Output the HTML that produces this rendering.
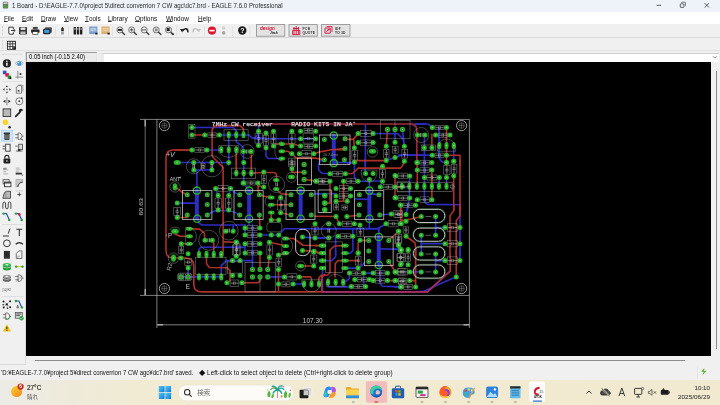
<!DOCTYPE html><html><head><meta charset="utf-8"><title>EAGLE</title><style>
html,body{margin:0;padding:0;}
body{will-change:transform;width:720px;height:405px;overflow:hidden;position:relative;background:#f0f0f0;font-family:"Liberation Sans","Noto Sans CJK JP",sans-serif;color:#111;}
.abs{position:absolute;}
.t{position:absolute;white-space:nowrap;line-height:1;transform-origin:0 50%;}
#title{left:0;top:0;width:720px;height:12px;background:#eef3f9;}
#menu{left:0;top:12px;width:720px;height:12px;background:#fff;}
#tb1{left:0;top:24px;width:720px;height:14px;background:#f0f0f0;border-bottom:1px solid #dadada;box-sizing:border-box;}
#tb2{left:0;top:38px;width:720px;height:13px;background:#f0f0f0;border-bottom:1px solid #e0e0e0;box-sizing:border-box;}
#left{left:0;top:51px;width:25px;height:313px;background:#f0f0f0;border-right:1px solid #dcdcdc;border-bottom:1px solid #dcdcdc;}
#canvas{left:26px;top:62px;width:685px;height:294px;background:#000;}
#cmd{left:99px;top:53px;width:620px;height:9px;border-left:5px solid #ececec;background:#fff;border-top:1px solid #cfcfcf;box-sizing:border-box}
#coord{left:26px;top:52.3px;width:71px;height:9.7px;background:#ebebeb;border:1px solid #e2e2e2;border-top-color:#9a9a9a;border-left-color:#9a9a9a;box-sizing:border-box;}
#vs{left:711px;top:62px;width:9px;height:304px;background:#f0f0f0;}
#vst{left:715.6px;top:71px;width:1px;height:278px;background:#8c8c8c;}
#hst{left:35px;top:359.8px;width:650px;height:1px;background:#8c8c8c;}
#status{left:0;top:366px;width:720px;height:14px;background:#f0f0f0;}
#task{left:0;top:380.2px;width:720px;height:24.8px;background:linear-gradient(90deg,#ecebe6 0%,#eeeadb 10%,#f1ebd2 22%,#f1ead0 100%);}
.m{top:14.6px;font-size:7px;transform:scaleX(0.92);}
.m u{text-decoration:none;display:inline-block;height:6.3px;border-bottom:0.6px solid #333;vertical-align:top}
</style></head><body>
<div class="abs" id="title"></div>
<div class="t" id="ttl" style="left:12.4px;top:2.7px;font-size:6.6px;color:#2a2a2a;transform:scaleX(0.93)">1 Board - D:\EAGLE-7.7.0\project 5\direct converrion 7 CW agc\dc7.brd - EAGLE 7.6.0 Professional</div>
<div class="abs" id="menu"></div>
<div class="t m" style="left:3.6px"><u>F</u>ile</div><div class="t m" style="left:22.4px"><u>E</u>dit</div><div class="t m" style="left:41.2px"><u>D</u>raw</div><div class="t m" style="left:63.6px"><u>V</u>iew</div><div class="t m" style="left:85px"><u>T</u>ools</div><div class="t m" style="left:108px"><u>L</u>ibrary</div><div class="t m" style="left:135px"><u>O</u>ptions</div><div class="t m" style="left:166px"><u>W</u>indow</div><div class="t m" style="left:198px"><u>H</u>elp</div>
<div class="abs" id="tb1"></div>
<div class="abs" id="tb2"></div>
<div class="abs" id="left"></div>
<div class="abs" id="cmd"></div>
<div class="abs" id="coord"></div>
<div class="t" id="crd" style="left:29px;top:54px;font-size:6.6px;color:#000;transform:scaleX(0.893)">0.05 inch (-0.15 2.40)</div>
<div class="abs" id="vs"></div><div class="abs" id="vst"></div>
<div class="abs" id="canvas"></div>
<div class="abs" id="hst"></div>
<div class="abs" id="status"></div>
<div class="t" id="st1" style="left:1px;top:369.6px;font-size:6.4px;color:#111;transform:scaleX(0.942)">'D:¥EAGLE-7.7.0¥project 5¥direct converrion 7 CW agc¥dc7.brd' saved.</div>
<div class="t" id="st2" style="left:198.6px;top:369.6px;font-size:6.4px;color:#111;transform:scaleX(0.992)">◆ Left-click to select object to delete (Ctrl+right-click to delete group)</div>
<div class="abs" id="task"></div>
<svg class="abs" style="left:0;top:0" width="720" height="405" viewBox="0 0 720 405"><line x1="2.5" y1="26" x2="2.5" y2="36" stroke="#b8b8b8" stroke-width="0.7" stroke-dasharray="0.7 0.7"/><line x1="2.5" y1="40" x2="2.5" y2="49" stroke="#b8b8b8" stroke-width="0.7" stroke-dasharray="0.7 0.7"/><line x1="55.5" y1="26" x2="55.5" y2="36" stroke="#dcdcdc" stroke-width="0.6"/><line x1="68.5" y1="26" x2="68.5" y2="36" stroke="#dcdcdc" stroke-width="0.6"/><line x1="86" y1="26" x2="86" y2="36" stroke="#dcdcdc" stroke-width="0.6"/><line x1="112.5" y1="26" x2="112.5" y2="36" stroke="#dcdcdc" stroke-width="0.6"/><line x1="176.7" y1="26" x2="176.7" y2="36" stroke="#dcdcdc" stroke-width="0.6"/><line x1="204.5" y1="26" x2="204.5" y2="36" stroke="#dcdcdc" stroke-width="0.6"/><line x1="232.6" y1="26" x2="232.6" y2="36" stroke="#dcdcdc" stroke-width="0.6"/><line x1="250" y1="26" x2="250" y2="36" stroke="#dcdcdc" stroke-width="0.6"/><g transform="translate(11.8 30.7)"><path d="M-3 -3.5h4.5v2M1.5 1.5v2h-3.3q-1.2 0-1.2-1.2v-5.8" fill="#fff" stroke="#222" stroke-width="0.9"/><path d="M-0.8 -0.2h3.8M1.8 -1.6l1.6 1.4-1.6 1.4" fill="none" stroke="#222" stroke-width="0.9"/></g><g transform="translate(23 30.7)"><rect x="-4" y="-3.8" width="8" height="7.6" rx="0.8" fill="#333"/><rect x="-2.4" y="-3.2" width="4.8" height="2.4" fill="#e8e8e8"/><rect x="-2.6" y="0.8" width="5.2" height="2.6" fill="#bbb"/></g><g transform="translate(35.3 30.7)"><rect x="-2.4" y="-3.8" width="4.8" height="2.4" fill="#444"/><rect x="-4.2" y="-1.2" width="8.4" height="3.2" rx="0.6" fill="#222"/><rect x="-2.6" y="1" width="5.2" height="2.8" fill="#fff" stroke="#222" stroke-width="0.6"/></g><g transform="translate(47.5 30.7)"><rect x="-2.6" y="-3.4" width="7" height="5.4" rx="1" fill="#555"/><rect x="-4.4" y="-2" width="7.4" height="5.6" rx="1.2" fill="#222"/><rect x="-3.2" y="-1" width="5" height="3.4" rx="0.8" fill="#3a9be0"/></g><g transform="translate(62.5 30.7)"><path d="M0 -4l1.6 2.2h-3.2z" fill="#222"/><rect x="-1.3" y="-1.6" width="2.6" height="2" fill="#222"/><rect x="-1.3" y="0.8" width="2.6" height="3" fill="#9a9a9a"/></g><g transform="translate(78 30.7)"><rect x="-4.4" y="-3.8" width="2.4" height="7.6" rx="0.5" fill="#222"/><rect x="-1.2" y="-3.8" width="2.4" height="7.6" rx="0.5" fill="#222"/><rect x="2" y="-3.8" width="2.4" height="7.6" rx="0.5" fill="#222"/><rect x="-4.4" y="-2.2" width="8.8" height="0.9" fill="#ccc"/></g><g transform="translate(93.3 30.7)"><rect x="-4.1" y="-4.2" width="8.2" height="7.6" fill="#7d9fcc"/><rect x="-3" y="-2.8" width="6" height="3.6" fill="#a4bcdc"/><path d="M-2.4 -1.8h1.6M0.4 -1.8h2M-2.4 -0.4h2.4" stroke="#e6eef8" stroke-width="0.6"/><rect x="2" y="2" width="2.2" height="1.8" fill="#222"/></g><g transform="translate(105.5 30.7)"><rect x="-4.1" y="-4.2" width="8.2" height="7.6" fill="#dbb078"/><rect x="-3" y="-2.8" width="6" height="3.6" fill="#e8cba0"/><path d="M-1.6 -2.4v2.6M1 -2.4v2.6" stroke="#f2c070" stroke-width="0.7"/><rect x="2" y="2" width="2.2" height="1.8" fill="#222"/></g><g transform="translate(120.7 30.7)"><circle cx="-0.8" cy="-0.8" r="3" fill="#f4f4f4" stroke="#555" stroke-width="0.8"/><line x1="1.6" y1="1.6" x2="3.8" y2="3.8" stroke="#444" stroke-width="1.5" stroke-linecap="round"/><rect x="-2.8" y="-1.8" width="4" height="2" fill="#222"/></g><g transform="translate(132.5 30.7)"><circle cx="-0.8" cy="-0.8" r="3" fill="#f4f4f4" stroke="#555" stroke-width="0.8"/><line x1="1.6" y1="1.6" x2="3.8" y2="3.8" stroke="#444" stroke-width="1.5" stroke-linecap="round"/><path d="M-2.4 -0.8h3.2M-0.8 -2.4v3.2" stroke="#333" stroke-width="0.9"/></g><g transform="translate(145 30.7)"><circle cx="-0.8" cy="-0.8" r="3" fill="#f4f4f4" stroke="#555" stroke-width="0.8"/><line x1="1.6" y1="1.6" x2="3.8" y2="3.8" stroke="#444" stroke-width="1.5" stroke-linecap="round"/><rect x="-2.4" y="-1.4" width="3.2" height="1.2" fill="none" stroke="#555" stroke-width="0.5"/></g><g transform="translate(157 30.7)"><circle cx="-0.8" cy="-0.8" r="3" fill="#f4f4f4" stroke="#555" stroke-width="0.8"/><line x1="1.6" y1="1.6" x2="3.8" y2="3.8" stroke="#444" stroke-width="1.5" stroke-linecap="round"/><rect x="-2.2" y="-2.2" width="2.8" height="2.8" fill="#888"/></g><g transform="translate(169.3 30.7)"><circle cx="-0.8" cy="-0.8" r="3" fill="#f4f4f4" stroke="#555" stroke-width="0.8"/><line x1="1.6" y1="1.6" x2="3.8" y2="3.8" stroke="#444" stroke-width="1.5" stroke-linecap="round"/><rect x="-2.6" y="-2.6" width="3" height="3" fill="#222"/><rect x="2.4" y="2.6" width="2" height="1.4" fill="#222"/></g><g transform="translate(184 30.7)"><path d="M-1.2 0.2q1-2.6 3.4-2.2q2 0.6 1.6 3.6" fill="none" stroke="#222" stroke-width="1.5"/><path d="M-4 -1.6l3.6 -0.2-1.4 3.6z" fill="#222"/></g><g transform="translate(197 30.7)"><path d="M1.2 0.2q-1-2.6-3.4-2.2q-2 0.6-1.6 3.6" fill="none" stroke="#c4c4c4" stroke-width="1.5"/><path d="M4 -1.6l-3.6 -0.2 1.4 3.6z" fill="#c4c4c4"/></g><g transform="translate(212 30.6)"><circle r="4.1" fill="#d9162d"/><rect x="-2.6" y="-0.8" width="5.2" height="1.6" fill="#fff"/></g><circle cx="223.7" cy="27.9" r="1.7" fill="#cfcfcf"/><circle cx="223.7" cy="32.9" r="1.8" fill="#a8a8a8"/><g transform="translate(242.3 30.5)"><circle r="4.2" fill="#1a1a1a"/><text x="0" y="2.5" text-anchor="middle" font-size="7" font-weight="bold" fill="#fff" font-family="Liberation Sans, sans-serif">?</text></g><rect x="256.4" y="24.6" width="28.400000000000034" height="11.6" fill="#e3e3e3" stroke="#8c8c8c" stroke-width="0.8"/><rect x="289" y="24.6" width="28.30000000000001" height="11.6" fill="#e3e3e3" stroke="#8c8c8c" stroke-width="0.8"/><rect x="321.5" y="24.6" width="28.5" height="11.6" fill="#e3e3e3" stroke="#8c8c8c" stroke-width="0.8"/><text x="260" y="30.3" font-size="4.6" fill="#d4143c" font-style="italic" font-weight="bold" font-family="Liberation Sans, sans-serif">design</text><text x="270.5" y="34.2" font-size="4.2" fill="#222" font-style="italic" font-weight="bold" font-family="Liberation Sans, sans-serif">link</text><path d="M293 28.5h6.4M294 27v7.6M296.2 26v8.6M298.4 27v7.6M292.6 30.4h7.2v4.2h-7.2z" fill="none" stroke="#d4143c" stroke-width="0.9"/><text x="302.5" y="30" font-size="3.3" fill="#333" font-weight="bold" font-family="Liberation Sans, sans-serif" letter-spacing="0.3">PCB</text><text x="302.5" y="33.8" font-size="3.3" fill="#333" font-weight="bold" font-family="Liberation Sans, sans-serif" letter-spacing="0.2">QUOTE</text><path d="M325 28h5.2v5.2h-5.2zM326.6 26.6h5.4v5.4" fill="none" stroke="#d4143c" stroke-width="0.9"/><path d="M325.6 32.6l2.4-3.6 2.4 0z" fill="#d4143c"/><text x="335" y="30" font-size="3.3" fill="#333" font-weight="bold" font-family="Liberation Sans, sans-serif" letter-spacing="0.2">IDF</text><text x="335" y="33.8" font-size="3.3" fill="#333" font-weight="bold" font-family="Liberation Sans, sans-serif" letter-spacing="0.2">TO 3D</text><g transform="translate(11.4 45.3)"><rect x="-4" y="-4" width="8" height="8" fill="#fff" stroke="#222" stroke-width="0.9"/><path d="M-1.4 -4v8M1.3 -4v8M-4 -1.4h8M-4 1.3h8" stroke="#222" stroke-width="0.8"/><rect x="1.8" y="1.8" width="2.4" height="2.4" fill="#222"/></g><rect x="2.8" y="1.8" width="5.4" height="6.8" rx="1" fill="#6a6a6a"/><rect x="3.4" y="4.6" width="4.2" height="3.4" fill="#4e9a4a"/><rect x="3.4" y="2.4" width="4.2" height="1.6" fill="#cfcfcf"/><path d="M656.6 5.3h4.4" stroke="#222" stroke-width="0.7"/><rect x="680.3" y="3.8" width="3.6" height="3.6" rx="0.7" fill="none" stroke="#222" stroke-width="0.7"/><path d="M681.6 3v-0.2q0-0.6 0.6-0.6h2.4q0.8 0 0.8 0.8v2.4q0 0.6-0.6 0.6" fill="none" stroke="#222" stroke-width="0.6"/><path d="M704.6 3.1l4.4 4.4M709 3.1l-4.4 4.4" stroke="#222" stroke-width="0.7"/><path d="M713 56.3l1.8 1.8 1.8-1.8" fill="none" stroke="#555" stroke-width="0.7"/><rect x="1.4" y="130.4" width="11.4" height="11" fill="#cfe4f7" stroke="#9cc7ee" stroke-width="0.5"/><line x1="2" y1="54.3" x2="23" y2="54.3" stroke="#b8b8b8" stroke-width="0.7" stroke-dasharray="0.7 0.7"/><line x1="2" y1="81.5" x2="23" y2="81.5" stroke="#d4d4d4" stroke-width="0.6"/><line x1="2" y1="224.5" x2="23" y2="224.5" stroke="#d4d4d4" stroke-width="0.6"/><line x1="2" y1="296.5" x2="23" y2="296.5" stroke="#d4d4d4" stroke-width="0.6"/><g transform="translate(6.9 63.4)"><circle r="4.1" fill="#222"/><rect x="-0.7" y="-0.8" width="1.4" height="3.2" fill="#fff"/><circle cy="-2.2" r="0.8" fill="#fff"/></g><g transform="translate(19.3 63.4)"><path d="M-4 0q4-4.4 8 0q-4 4.4-8 0z" fill="#fff" stroke="#888" stroke-width="0.6"/><circle r="2.2" fill="#2a8fe0"/><circle cx="-0.6" cy="-0.6" r="0.8" fill="#cfe8ff"/></g><g transform="translate(6.9 74.7)"><rect x="-4" y="-4" width="3.6" height="3.6" fill="#2a58c8"/><rect x="-1.6" y="-1.6" width="3.6" height="3.6" fill="#d42040"/><rect x="0.8" y="0.8" width="3.4" height="3.4" fill="#1f9a3a"/><rect x="2.6" y="2.6" width="1.8" height="1.8" fill="#111"/></g><g transform="translate(19.3 74.7)"><path d="M-1.5 -4v8M-4 2.4h8" stroke="#777" stroke-width="0.8"/><rect x="0.3" y="-1.6" width="1.8" height="1.8" fill="#333"/></g><g transform="translate(6.9 89.4)"><path d="M0 -4l1.3 1.7h-2.6zM0 4l1.3-1.7h-2.6zM-4 0l1.7-1.3v2.6zM4 0l-1.7-1.3v2.6z" fill="#444"/><circle r="0.7" fill="#444"/></g><g transform="translate(19.3 89.4)"><path d="M-3 -2.2v6h5.2v-7.6h-3.4z" fill="#f4f4f4" stroke="#555" stroke-width="0.7"/><path d="M-1.2 -4.2h4.8v6.4" fill="none" stroke="#777" stroke-width="0.7"/><rect x="-1.6" y="0.6" width="1.8" height="1.6" fill="#444"/></g><g transform="translate(6.9 101.3)"><path d="M0 -4v8" stroke="#555" stroke-width="0.7"/><path d="M-1.4 -1.6v3.2l-2.4-1.6zM1.4 -1.6v3.2l2.4-1.6z" fill="#333"/></g><g transform="translate(19.3 101.3)"><circle r="3.5" fill="#fafafa" stroke="#555" stroke-width="0.8"/><circle r="1" fill="#333"/><path d="M2 -4.2l1.8 1.2-2 0.8z" fill="#333"/></g><g transform="translate(6.9 112.7)"><rect x="-3.8" y="-3.8" width="7.6" height="7.6" fill="#b9b9b9" stroke="#333" stroke-width="0.9"/></g><g transform="translate(19.3 112.7)"><path d="M-3.6 3.6l4-4" stroke="#222" stroke-width="1.8" stroke-linecap="round"/><path d="M0.4 -3.6q2.6-1 3.6 1.4l-1.8 0.2-0.6 1.6q-2.2 0.2-2.2-1.6z" fill="#222"/></g><circle cx="5.4" cy="122.3" r="2.8" fill="#fbd431"/><circle cx="9.6" cy="127.2" r="1.2" fill="#222"/><g transform="translate(6.9 136.2)"><rect x="-2.6" y="-2.4" width="5.2" height="6.2" rx="0.8" fill="#444"/><rect x="-3.2" y="-3.6" width="6.4" height="1.4" rx="0.5" fill="#333"/><path d="M-1.2 -1.4v4.2M0 -1.4v4.2M1.2 -1.4v4.2" stroke="#aaa" stroke-width="0.5"/></g><g transform="translate(19.3 136.2)"><path d="M-4 -1.6h3M-4 1.6h3M2.2 0h2" stroke="#444" stroke-width="0.7"/><path d="M-1.2 -3.2h1.6q2.4 0.8 2.4 3.2q0 2.4-2.4 3.2h-1.6z" fill="#eee" stroke="#444" stroke-width="0.7"/><path d="M1 2.4l2.8 1.6" stroke="#444" stroke-width="0.9"/></g><g transform="translate(6.9 147.6)"><rect x="-1.2" y="-3.4" width="4.4" height="7" fill="#f8f8f8" stroke="#333" stroke-width="0.9"/><path d="M-4.2 -1.4h2.2M-4.2 1.2h2.2" stroke="#333" stroke-width="0.9"/></g><g transform="translate(19.3 147.6)"><rect x="-0.6" y="-3.4" width="3.8" height="5.4" fill="#ddd" stroke="#444" stroke-width="0.8"/><path d="M-4 -1.4h2.4M-3.4 3.4h6.6" stroke="#444" stroke-width="0.8"/><rect x="-1.4" y="1.4" width="2.4" height="2.2" fill="#333"/></g><g transform="translate(6.9 159.4)"><rect x="-3.4" y="-0.8" width="6.8" height="4.8" rx="0.8" fill="#222"/><path d="M-2 -0.8v-1.2q0-2 2-2q2 0 2 2v1.2" fill="none" stroke="#222" stroke-width="1.1"/><rect x="-0.5" y="0.6" width="1" height="1.8" fill="#ddd"/></g><g transform="translate(6.9 171.3)"><path d="M-3.6 -3.2h3.8M-3.6 -1.4h5M-3.6 0.6h3M-3.6 2.6h5" stroke="#9a9a9a" stroke-width="0.7"/><path d="M-3.6 -2.4h3" stroke="#444" stroke-width="0.8"/></g><g transform="translate(19.3 171.3)"><path d="M-3.6 -3.2h3.8M-3.6 -1.4h5M-3.6 0.6h3" stroke="#9a9a9a" stroke-width="0.7"/><rect x="-3.6" y="1.4" width="6.2" height="1.8" fill="#333"/><path d="M2 3.4h2.2l-1.1 1z" fill="#222"/></g><g transform="translate(6.9 183.1)"><rect x="-3.8" y="-3.4" width="6" height="4.2" fill="#eee" stroke="#444" stroke-width="0.8"/><rect x="-2.4" y="-1" width="6.4" height="4.6" fill="#f4f4f4" stroke="#333" stroke-width="0.9"/><rect x="-2.4" y="-1" width="6.4" height="1.4" fill="#444"/></g><g transform="translate(19.3 183.1)"><path d="M-3.4 -3.6h7v1.6q-4.4 0-5 5.6h-2z" fill="#ccc" stroke="#888" stroke-width="0.5"/><path d="M3.6 -1q-4.6 0.4-5 4.8" fill="none" stroke="#333" stroke-width="1"/></g><g transform="translate(6.9 194.5)"><path d="M-4 3.8h7.6v-7h-4q-2.4 0.6-2.8 3.6z" fill="#bbb" stroke="#333" stroke-width="0.8"/><path d="M-1 -3v6.6" stroke="#666" stroke-width="0.5"/></g><g transform="translate(19.3 194.5)"><path d="M-3.6 -3.6h7.2" stroke="#999" stroke-width="0.6" stroke-dasharray="1 0.6"/><path d="M0 -2.2v4M-2 0h4" stroke="#333" stroke-width="0.8"/></g><g transform="translate(6.9 205.4)"><path d="M-4 3.4v-4.8q0-2 1.4-2q1.3 0 1.3 2v3q0 1.8 1.3 1.8q1.3 0 1.3-1.8v-3q0-2 1.3-2q1.4 0 1.4 2v4.8" fill="none" stroke="#333" stroke-width="0.9"/></g><g transform="translate(6.9 217)"><path d="M-3.4 -3.4h3l2.6 6" fill="none" stroke="#2a55c8" stroke-width="1.2"/><circle cx="-3.4" cy="-3.4" r="1.2" fill="#25a03c"/><circle cx="2.4" cy="3" r="1.2" fill="#25a03c"/></g><g transform="translate(19.3 217)"><path d="M-3.4 -3.4h3l2.6 6" fill="none" stroke="#2a55c8" stroke-width="1.2"/><circle cx="-3.4" cy="-3.4" r="1.2" fill="#25a03c"/><circle cx="2.4" cy="3" r="1.2" fill="#25a03c"/><circle cx="0" cy="-2.6" r="1.3" fill="#d42040"/></g><g transform="translate(6.9 232.4)"><path d="M-4 3.6h6M1.4 1.2l1.6-5" stroke="#333" stroke-width="1" fill="none"/></g><g transform="translate(19.3 232.4)"><path d="M-3 -3.2h6M0 -3.2v6.8" stroke="#333" stroke-width="1.1" fill="none"/></g><g transform="translate(6.9 243.3)"><circle r="3.4" fill="none" stroke="#333" stroke-width="1"/></g><g transform="translate(19.3 243.3)"><path d="M-3.6 1q3.6-3.4 7.2 0" fill="none" stroke="#222" stroke-width="1.2"/></g><g transform="translate(6.9 254.7)"><rect x="-3" y="-3.8" width="6" height="7.8" fill="#2b2b2b"/></g><g transform="translate(19.3 254.7)"><path d="M-3 3.8v-5l2.6-2.6h3v7.6z" fill="#f6f6f6" stroke="#555" stroke-width="0.8"/><path d="M-1.4 3.8v-2.4h2.2" fill="none" stroke="#777" stroke-width="0.6"/></g><g transform="translate(6.9 266.6)"><ellipse cy="2" rx="4" ry="1.9" fill="#1f9a3a"/><rect x="-4" y="-1.8" width="8" height="3.8" fill="#1f9a3a"/><ellipse cy="-1.8" rx="4" ry="1.9" fill="#38b850"/><ellipse cy="-1.8" rx="1.6" ry="0.7" fill="#e8ffe8"/><path d="M-4 0.3q4 2.4 8 0" fill="none" stroke="#d8f5dc" stroke-width="0.6"/></g><g transform="translate(19.3 266.6)"><path d="M-4 0h8" stroke="#d9c72a" stroke-width="1.2"/><circle cx="-3.2" r="1.2" fill="#25a03c"/><circle cx="3.2" r="1.2" fill="#25a03c"/></g><g transform="translate(6.9 278.1)"><ellipse cy="1.8" rx="4" ry="1.8" fill="#666"/><rect x="-4" y="-1.6" width="8" height="3.4" fill="#666"/><ellipse cy="-1.6" rx="4" ry="1.8" fill="#999"/><ellipse cy="-1.6" rx="1.6" ry="0.7" fill="#eee"/><path d="M-4 0.3q4 2.2 8 0" fill="none" stroke="#ddd" stroke-width="0.6"/></g><g transform="translate(19.3 278.1)"><path d="M-4 -1.6h3M-4 1.6h3M2.2 0h2" stroke="#444" stroke-width="0.7"/><path d="M-1.2 -3.2h1.6q2.4 0.8 2.4 3.2q0 2.4-2.4 3.2h-1.6z" fill="#eee" stroke="#444" stroke-width="0.7"/><path d="M-3.4 3.6l6.6-6.6" stroke="#666" stroke-width="0.5"/></g><text x="2.6" y="291.2" font-size="2.6" fill="#555" font-family="Liberation Sans, sans-serif">|10| R2</text><g transform="translate(6.9 304.4)"><path d="M-3.4 -3l6.6 5.8M-3.2 3l6.2-6.2M0 0l0.6 3.6M0 0l-3.6 0.4" stroke="#888" stroke-width="0.5"/><circle cx="-3.4" cy="-3" r="1" fill="#222"/><circle cx="3.2" cy="-3.2" r="1" fill="#222"/><circle r="1.1" fill="#222"/><circle cx="-3.2" cy="3" r="1" fill="#222"/><circle cx="3.2" cy="2.8" r="1" fill="#222"/><circle cx="0.6" cy="3.8" r="0.8" fill="#222"/><circle cx="-3.8" cy="0.4" r="0.8" fill="#222"/></g><g transform="translate(19.3 304.4)"><path d="M-3.4 -3.4h3l2.6 6" fill="none" stroke="#2a55c8" stroke-width="1.2"/><circle cx="-3.4" cy="-3.4" r="1.2" fill="#25a03c"/><circle cx="2.6" cy="3" r="1.2" fill="#25a03c"/><path d="M-2.6 3.6l1-3 1 3zM-2.3 2.6h1.4" stroke="#333" stroke-width="0.5" fill="none"/></g><g transform="translate(6.9 316.2)"><path d="M-4 -1.6h3M-4 1.6h3M2.2 0h2" stroke="#444" stroke-width="0.7"/><path d="M-1.2 -3.2h1.6q2.4 0.8 2.4 3.2q0 2.4-2.4 3.2h-1.6z" fill="#f4f4f4" stroke="#444" stroke-width="0.7"/><path d="M-0.6 1.8l1.6 1.6 3-3.6" fill="none" stroke="#2aa53e" stroke-width="1"/></g><g transform="translate(19.3 316.2)"><rect x="-4" y="-3.6" width="7" height="5.6" fill="#ddd" stroke="#444" stroke-width="0.7"/><path d="M-3 -2.2h5M-3 -0.6h3.4" stroke="#333" stroke-width="0.8"/><circle cx="2.2" cy="2" r="2.2" fill="#2aa53e"/><path d="M1 2l0.9 0.9 1.5-1.7" stroke="#fff" stroke-width="0.6" fill="none"/></g><g transform="translate(6.9 328)"><path d="M0 -3.8l4.2 7.4h-8.4z" fill="#f2c318"/><rect x="-0.5" y="-1.4" width="1" height="2.8" fill="#222"/><rect x="-0.5" y="2" width="1" height="0.9" fill="#222"/></g><defs><linearGradient id="wg" x1="0" y1="0" x2="1" y2="1"><stop offset="0" stop-color="#fbd02a"/><stop offset="1" stop-color="#f4851c"/></linearGradient><linearGradient id="wl" x1="0" y1="0" x2="1" y2="1"><stop offset="0" stop-color="#58c8ff"/><stop offset="1" stop-color="#0a7ad8"/></linearGradient></defs><circle cx="16.6" cy="391.6" r="5.5" fill="url(#wg)"/><circle cx="20.6" cy="386.6" r="3.1" fill="#c42b1c"/><text x="20.6" y="388.4" font-size="4.8" font-weight="bold" fill="#fff" text-anchor="middle" font-family="Liberation Sans, Noto Sans CJK JP, sans-serif">6</text><text x="27" y="389.6" font-size="6.4" fill="#1c1c1c" stroke="#1c1c1c" stroke-width="0.15" font-family="Liberation Sans, Noto Sans CJK JP, sans-serif">27°C</text><text x="27" y="398.6" font-size="5.6" fill="#555" font-family="Liberation Sans, Noto Sans CJK JP, sans-serif">晴れ</text><rect x="158.8" y="385.9" width="5.8" height="6.2" rx="0.4" fill="url(#wl)"/><rect x="165.3" y="385.9" width="5.8" height="6.2" rx="0.4" fill="url(#wl)"/><rect x="158.8" y="392.79999999999995" width="5.8" height="6.2" rx="0.4" fill="url(#wl)"/><rect x="165.3" y="392.79999999999995" width="5.8" height="6.2" rx="0.4" fill="url(#wl)"/><rect x="178.4" y="385" width="115.1" height="15.8" rx="7.9" fill="#fcfbf7" stroke="#e4dfcc" stroke-width="0.5"/><circle cx="187.2" cy="392.2" r="2.7" fill="none" stroke="#2a2a2a" stroke-width="1.05"/><path d="M189.2 394.3l2.1 2.1" stroke="#2a2a2a" stroke-width="1.2" stroke-linecap="round"/><text x="197.2" y="395.2" font-size="6.6" fill="#707070" font-family="Liberation Sans, Noto Sans CJK JP, sans-serif">検索</text><g><path d="M277.5 398v-8" stroke="#e58a8a" stroke-width="1.1"/><path d="M277.5 390q-4-3.6-6.6-0.6M277.5 390q-2.4-4.6-5.4-3.6M277.5 390q1-4.8 4.6-4M277.5 390q4-3.4 6.4-0.4M277.5 390q-3.4 0.4-4.4 3.2M277.5 390q3.6 0.6 4.2 3.4" stroke="#18a596" stroke-width="1.3" fill="none" stroke-linecap="round"/><path d="M268 397q-1.8-4 1.2-6.6q2.4 3.4 0.6 6.6zM271.4 398q-0.4-3.4 2.4-4.6q0.8 3-0.8 4.6zM284.5 398q-2-4.4 1.4-7.4q2.6 3.8 0.4 7.4zM288.6 397.5q-0.8-3.6 1.8-5.2q1.2 3.2-0.4 5.2z" fill="#58b548"/><circle cx="273.6" cy="388" r="1.1" fill="#f2a23a"/><circle cx="283.4" cy="386.6" r="0.9" fill="#ee6f8e"/><circle cx="281.6" cy="396.4" r="1.1" fill="#f08a3c"/><circle cx="267.6" cy="389.8" r="0.8" fill="#f2c23a"/><circle cx="290.4" cy="390.4" r="0.8" fill="#ee6f8e"/></g><rect x="303.2" y="387.6" width="8.6" height="8" rx="0.9" fill="#d9d9d9" stroke="#f6f6f6" stroke-width="0.7"/><rect x="299.6" y="389.8" width="8.8" height="8.4" rx="0.9" fill="#1d1d1d"/><rect x="303.6" y="390.2" width="4.6" height="5" fill="#c8c8c8"/><g transform="translate(329.7 392.3)"><path d="M-2.2 -5.6q3-1 4 1.6l-2 6.6q-1 2.8-3.8 2.4q-3-0.6-2-3.6l1.6-5q0.6-1.6 2.2-2z" fill="#2b8df0"/><path d="M1.4 -5.4q3.6-0.8 4.6 1.8q0.8 2-0.6 4l-3.4 0.4z" fill="#b455e0"/><path d="M5.6 -0.4q1 3-1.4 5q-2 1.6-5 1l1.6-5.4z" fill="#f59a2e"/><path d="M-3.8 4.6q-2.4-0.4-2-3l1-3.4 2.6 3.4z" fill="#27c4c0"/><rect x="-2.2" y="-2.2" width="4.2" height="4" rx="1.4" fill="#fbf5e6"/></g><path d="M346 388.2q0-1.2 1.2-1.2h3l1.2 1.4h6.4q1.2 0 1.2 1.2v7.4q0 1.2-1.2 1.2h-10.6q-1.2 0-1.2-1.2z" fill="#e9a81c"/><rect x="346" y="389.6" width="13" height="8.6" rx="1" fill="#fcd253"/><rect x="346" y="395.4" width="13" height="2.8" fill="#2f8fe0"/><rect x="365.8" y="381.2" width="21.4" height="21.6" rx="2.2" fill="#f2bcbc"/><g transform="translate(376.2 391.4)"><circle r="6" fill="#1b74cf"/><path d="M-6 0.6q0.4-6.4 6.4-6.6q5 0.4 5.6 5q-3.6-3.2-7.4-0.8q-2.4 2-1 5q-3-0.4-3.6-2.6z" fill="#3ccf9e"/><path d="M5.8 1.6q-1 4-5 4.4q-3.4 0-4.6-2.8q2.6 1.6 5.4 0.4q2.6-1.2 4.2-2z" fill="#155bb5"/><circle cx="1.6" cy="1" r="2.2" fill="#f2bcbc"/></g><rect x="374.4" y="401.4" width="3.8" height="1.1" rx="0.55" fill="#c42b1c"/><g transform="translate(398 392.4)"><path d="M-2.6 -4v-1.4q0-0.8 0.8-0.8h3.6q0.8 0 0.8 0.8v1.4" stroke="#1b4f9a" stroke-width="1" fill="none"/><rect x="-6.2" y="-4.2" width="12.4" height="10" rx="1.4" fill="#1f5cb8"/><rect x="-2.7" y="-2.2" width="2.4" height="2.4" fill="#f25022"/><rect x="0.3" y="-2.2" width="2.4" height="2.4" fill="#7fba00"/><rect x="-2.7" y="0.8" width="2.4" height="2.4" fill="#00a4ef"/><rect x="0.3" y="0.8" width="2.4" height="2.4" fill="#ffb900"/></g><g transform="translate(422 392)"><rect x="-6" y="-5" width="12" height="10.4" rx="0.9" fill="#f4f4f4" stroke="#3a3a3a" stroke-width="0.8"/><rect x="-6" y="-5" width="12" height="2.3" fill="#2a2a2a"/><rect x="-4.2" y="-1.4" width="5" height="3" fill="#2aa33e"/><rect x="-1.8" y="2.2" width="5.4" height="1.8" fill="#d42a8c"/></g><g transform="translate(445.5 392.2)"><circle r="6" fill="#ff9d1f"/><circle cx="0.4" cy="0.6" r="3.9" fill="#8040e4"/><path d="M-6 -1.4q2.2-6 8-4.6q-3.4 1.2-3 4q3.4 0.2 3.4 3.4q-0.4 3.6-4.2 4q-4.6-0.6-4.2-6.8z" fill="#ff5a2a"/><path d="M-5.6 2q1.6 4 5.8 4q4.6-0.4 5.6-4.6q-2 3-5.6 3q-3.6-0.2-5.8-2.4z" fill="#ffcf3a"/></g><g transform="translate(468.7 392.4)"><path d="M-6 0.4q0-5.4 6-5.4q6 0 6 4.6q0 2.6-2.8 2.6q-1.8 0-1.6 1.4q0.2 2-2.2 2q-5.4-0.2-5.400-5.2z" fill="#3fa3ea"/><circle cx="-3" cy="-1.6" r="1.2" fill="#e6432e"/><circle cx="0.2" cy="-3" r="1.2" fill="#f7d038"/><circle cx="-3" cy="2" r="1.2" fill="#49b65a"/><circle cx="3.2" cy="-1.8" r="1.1" fill="#ffffff"/><path d="M0.6 5.200l4.8-9" stroke="#d99a4e" stroke-width="1.5" stroke-linecap="round"/></g><g transform="translate(492.1 392.2)"><rect x="-6" y="-5.8" width="12" height="11.6" rx="2" fill="#2e83dc"/><path d="M-5.4 4.8l3.8-5.200 2.800 3 1.800-1.800 2.400 4z" fill="#b4dbfa"/><circle cx="2.800" cy="-2.800" r="1.200" fill="#fff"/></g><g transform="translate(515.3 392.3)"><rect x="-5.2" y="-6" width="10.4" height="12" rx="0.9" fill="#62b9ec"/><rect x="-5.2" y="-6" width="10.4" height="2.200" fill="#2c2c2c"/><path d="M-3.600 -1.600h7.200M-3.600 0.600h7.200M-3.600 2.800h7.200" stroke="#1e5f8f" stroke-width="0.700"/></g><rect x="529" y="381.6" width="16" height="20.4" rx="2" fill="#fdfdfb"/><path d="M539.600 387.800q-5.200 0.600-4.800 4.600q0.600 2.400 4 2" fill="none" stroke="#d4142c" stroke-width="1.900"/><text x="541.400" y="393" font-size="3.400" fill="#333" text-anchor="middle" font-family="Liberation Sans, Noto Sans CJK JP, sans-serif">25</text><text x="538" y="397.600" font-size="2.900" font-weight="bold" fill="#222" text-anchor="middle" font-family="Liberation Sans, Noto Sans CJK JP, sans-serif">ATOK</text><rect x="532.8" y="400.6" width="9.2" height="1.2" rx="0.6" fill="#2f6fd0"/><rect x="352.0" y="401.500" width="2.600" height="1" rx="0.500" fill="#8a8a8a"/><rect x="420.7" y="401.500" width="2.600" height="1" rx="0.500" fill="#8a8a8a"/><rect x="444.2" y="401.500" width="2.600" height="1" rx="0.500" fill="#8a8a8a"/><rect x="467.4" y="401.500" width="2.600" height="1" rx="0.500" fill="#8a8a8a"/><rect x="490.7" y="401.500" width="2.600" height="1" rx="0.500" fill="#8a8a8a"/><rect x="514.0" y="401.500" width="2.600" height="1" rx="0.500" fill="#8a8a8a"/><path d="M586.4 393.6l2.6-2.6 2.6 2.6" fill="none" stroke="#2a2a2a" stroke-width="0.95"/><path d="M602 395h6.200q2.200 0 2.200-1.800q0-1.600-1.800-1.800q-0.400-2.400-2.800-2.400q-2.200 0-2.900 1.700q-2.400 0-2.400 2.200q0 2.100 1.500 2.100z" fill="#4a4a4a" stroke="#2a2a2a" stroke-width="0.8"/><path d="M601.600 388.400l8 7.600" stroke="#f1ead0" stroke-width="1.6"/><path d="M601.600 388.400l8 7.600" stroke="#2a2a2a" stroke-width="0.8"/><text x="621.8" y="396.4" font-size="10" fill="#3a3a3a" text-anchor="middle" font-family="Liberation Sans, Noto Sans CJK JP, sans-serif">A</text><rect x="634.6" y="388.4" width="7.200" height="6" rx="0.6" fill="none" stroke="#2a2a2a" stroke-width="0.9"/><path d="M636.400 397h3.600M638.200 394.400v2.600" stroke="#2a2a2a" stroke-width="0.9"/><circle cx="642.600" cy="388.600" r="1.200" fill="#f1ead0" stroke="#2a2a2a" stroke-width="0.600"/><path d="M648.400 391.400h1.500l2.100-1.900v5.800l-2.100-1.900h-1.500z" fill="none" stroke="#2a2a2a" stroke-width="0.650"/><path d="M653.800 391.300l2.300 2.300M656.100 391.300l-2.300 2.300" stroke="#2a2a2a" stroke-width="0.650"/><rect x="660.800" y="390" width="8" height="4.800" rx="1.100" fill="#1e1e1e"/><rect x="668.800" y="391.400" width="1" height="2" fill="#1e1e1e"/><path d="M662 390.200l1.400-2.200 1.600 2.200z" fill="#1e1e1e"/><text x="710" y="389.900" font-size="6.200" fill="#222" text-anchor="end" font-family="Liberation Sans, Noto Sans CJK JP, sans-serif">10:10</text><text x="710" y="398.600" font-size="6.200" fill="#222" text-anchor="end" textLength="32" lengthAdjust="spacingAndGlyphs" font-family="Liberation Sans, Noto Sans CJK JP, sans-serif">2025/06/29</text><rect x="697" y="366.5" width="0.5" height="12" fill="#dcdcdc"/><path d="M704.6 367.8l-3.4 4h2.4l-1 3.4 3.8-4.4h-2.6z" fill="#58b820"/></svg>
<svg class="abs" style="left:0;top:0" width="720" height="405" viewBox="0 0 720 405" font-family="Liberation Sans, sans-serif"><g fill="none" stroke="#b4b4b4"><path d="M140.0 119.4 L469.4 119.4" stroke-width="0.7"/><path d="M140.0 295.4 L469.4 295.4" stroke-width="0.7"/><path d="M156.9 119.4 L156.9 328.0" stroke-width="0.7"/><path d="M469.4 119.4 L469.4 328.0" stroke-width="0.7"/><path d="M145.2 119.4 L145.2 295.4" stroke-width="0.6"/><path d="M156.9 324.8 L469.4 324.8" stroke-width="0.7"/><path d="M145.2 120.0 L145.2 126.5" stroke-width="1.3"/><path d="M145.2 289.0 L145.2 295.0" stroke-width="1.3"/><path d="M157.5 324.8 L163.0 324.8" stroke-width="1.3"/><path d="M463.5 324.8 L469.0 324.8" stroke-width="1.3"/></g><g fill="none" stroke="#2d2dc6" stroke-linecap="round" stroke-linejoin="round"><path d="M191.88 127.5 L233.12 127.5 L236.25 130.62 L236.25 141.88 L243.12 146.88 L243.12 151.5" stroke-width="1.6"/><path d="M219.38 135.0 L248.75 135.0 L252.5 138.12 L265.0 138.12" stroke-width="1.6"/><path d="M255.0 138.12 L258.5 133.75 L258.5 126.25" stroke-width="1.6"/><path d="M206.88 150.0 L221.25 150.0" stroke-width="1.6"/><path d="M228.75 135.0 L228.75 165.0" stroke-width="1.6"/><path d="M243.5 151.5 L243.5 158.75" stroke-width="1.6"/><path d="M258.5 145.62 L258.5 131.5" stroke-width="1.6"/><path d="M255.0 138.75 L315.62 138.75" stroke-width="1.6"/><path d="M266.0 147.75 L266.0 156.25 L268.12 158.5 L281.88 158.5" stroke-width="1.6"/><path d="M333.75 135.62 L333.75 163.12" stroke-width="4.0"/><path d="M415.0 124.0 L425.0 124.0" stroke-width="1.6"/><path d="M365.38 125.62 L365.38 165.0" stroke-width="1.6"/><path d="M373.12 133.5 L397.5 133.75 L403.12 138.75 L404.38 146.25" stroke-width="1.6"/><path d="M395.0 129.38 L395.0 142.25" stroke-width="1.6"/><path d="M402.5 129.38 L404.38 146.25" stroke-width="1.6"/><path d="M425.0 155.0 L402.5 155.0 L395.0 157.5 L386.25 160.62" stroke-width="1.6"/><path d="M347.5 163.12 L354.38 162.5" stroke-width="1.6"/><path d="M415.0 124.0 L428.12 124.0 L432.25 127.5" stroke-width="1.6"/><path d="M424.38 135.0 L424.38 165.0" stroke-width="1.6"/><path d="M439.0 128.12 L439.0 145.62" stroke-width="1.6"/><path d="M398.75 155.0 L432.25 155.25" stroke-width="1.6"/><path d="M439.0 146.25 L439.0 157.5 L441.88 161.88 L446.5 162.5" stroke-width="1.6"/><path d="M453.75 145.62 L453.75 161.25" stroke-width="1.6"/><path d="M177.25 162.5 L230.0 162.5" stroke-width="1.6"/><path d="M193.75 170.0 L211.88 170.0" stroke-width="1.6"/><path d="M196.88 170.0 L196.88 190.62" stroke-width="1.6"/><path d="M196.88 190.62 L196.88 218.75" stroke-width="4.0"/><path d="M177.25 203.12 L196.88 203.12" stroke-width="1.6"/><path d="M215.62 188.5 L218.12 195.62" stroke-width="1.6"/><path d="M230.62 188.5 L228.75 195.62" stroke-width="1.6"/><path d="M230.62 188.5 L235.0 192.75 L239.38 194.75" stroke-width="1.6"/><path d="M243.75 160.0 L243.75 183.12" stroke-width="1.6"/><path d="M243.75 183.12 L248.75 190.62" stroke-width="1.6"/><path d="M249.12 190.62 L249.12 218.75" stroke-width="4.0"/><path d="M300.62 190.62 L300.62 218.75" stroke-width="4.0"/><path d="M311.25 194.75 L315.0 193.75 L325.0 193.75" stroke-width="1.6"/><path d="M324.4 159.75 L320.0 161.0 L318.5 165.0 L318.7 170.0 L322.0 173.2 L330.0 173.75" stroke-width="1.6"/><path d="M333.75 162.5 L354.38 162.5" stroke-width="1.6"/><path d="M354.38 162.5 L354.38 177.25 L358.12 181.25" stroke-width="1.6"/><path d="M315.0 193.75 L335.62 193.75 L336.0 196.0" stroke-width="1.6"/><path d="M358.12 181.25 L382.5 181.0" stroke-width="1.6"/><path d="M369.38 179.38 L369.38 190.62" stroke-width="1.6"/><path d="M365.0 160.0 L365.25 172.5" stroke-width="1.6"/><path d="M382.5 181.25 L380.25 186.88" stroke-width="1.6"/><path d="M369.38 190.62 L369.38 218.75" stroke-width="4.0"/><path d="M355.62 199.0 L369.38 199.38" stroke-width="1.6"/><path d="M369.38 193.5 L379.0 194.75" stroke-width="2.2"/><path d="M424.38 160.0 L424.38 201.88 L427.5 204.38 L459.38 204.75" stroke-width="1.6"/><path d="M409.75 176.0 L409.38 186.25 L409.38 197.5 L407.5 210.0" stroke-width="1.6"/><path d="M439.38 177.5 L439.0 186.25" stroke-width="1.6"/><path d="M446.5 177.5 L446.5 186.25" stroke-width="1.6"/><path d="M197.5 218.5 L199.38 223.5 L202.25 225.0 L245.0 225.0" stroke-width="1.6"/><path d="M207.25 215.0 L213.75 211.25 L217.5 210.62 L230.0 210.62 L236.25 213.12 L240.0 215.62" stroke-width="1.6"/><path d="M199.0 253.12 L199.0 249.0 L201.0 247.25 L245.0 247.25" stroke-width="1.6"/><path d="M233.12 231.25 L233.12 225.62" stroke-width="1.6"/><path d="M245.0 225.0 L245.0 235.0" stroke-width="1.6"/><path d="M249.12 218.75 L249.12 225.0" stroke-width="1.6"/><path d="M252.5 223.75 L252.5 255.0" stroke-width="1.2"/><path d="M245.0 243.75 L245.0 253.12" stroke-width="1.6"/><path d="M260.0 235.0 L278.75 235.0 L284.38 228.75 L325.0 228.75" stroke-width="1.6"/><path d="M302.5 236.88 L315.0 238.12 L325.0 238.12" stroke-width="1.6"/><path d="M236.25 247.5 L245.0 247.5" stroke-width="1.6"/><path d="M379.75 215.0 L391.25 214.0" stroke-width="1.6"/><path d="M315.0 228.75 L377.5 228.75 L386.0 223.75" stroke-width="1.9"/><path d="M369.38 218.75 L369.38 228.75" stroke-width="1.6"/><path d="M378.75 228.75 L378.75 236.88" stroke-width="1.9"/><path d="M315.0 238.12 L328.75 237.75" stroke-width="1.6"/><path d="M352.88 228.75 L352.88 250.62 L350.25 253.12 L345.0 253.12" stroke-width="1.6"/><path d="M335.62 236.25 L335.62 255.0" stroke-width="1.6"/><path d="M378.75 236.88 L378.75 265.0" stroke-width="4.0"/><path d="M378.75 248.75 L401.25 249.38" stroke-width="1.6"/><path d="M460.0 205.0 L460.0 255.0" stroke-width="1.6"/><path d="M407.5 207.5 L406.0 214.38" stroke-width="1.6"/><path d="M435.62 216.5 L435.62 235.0" stroke-width="1.6"/><path d="M435.62 227.5 L445.0 227.5" stroke-width="1.6"/><path d="M421.25 235.0 L421.25 253.12" stroke-width="1.6"/><path d="M421.25 243.75 L445.0 243.75" stroke-width="1.6"/><path d="M395.0 249.38 L400.62 249.38" stroke-width="1.6"/><path d="M181.0 276.88 L221.25 276.88" stroke-width="1.6"/><path d="M188.12 268.12 L188.12 276.88" stroke-width="1.6"/><path d="M221.25 276.88 L221.25 265.62 L226.5 260.62 L232.5 260.62" stroke-width="1.6"/><path d="M252.5 250.0 L252.5 269.38" stroke-width="1.6"/><path d="M235.0 260.62 L252.5 260.62" stroke-width="1.6"/><path d="M267.75 276.88 L284.38 276.88" stroke-width="1.6"/><path d="M293.12 284.0 L304.12 284.0" stroke-width="1.6"/><path d="M335.62 250.0 L335.62 256.88 L331.88 260.62 L322.5 260.62" stroke-width="1.6"/><path d="M322.5 268.12 L322.5 291.88" stroke-width="1.6"/><path d="M345.0 268.12 L358.12 268.12 L362.5 265.0 L364.38 262.5" stroke-width="1.6"/><path d="M363.75 273.12 L373.12 273.12" stroke-width="1.6"/><path d="M363.75 273.12 L363.75 285.62" stroke-width="1.0"/><path d="M349.38 273.12 L349.38 278.5 L345.62 281.25 L343.12 282.25" stroke-width="1.6"/><path d="M328.12 282.25 L328.12 286.88 L351.25 286.88" stroke-width="1.6"/><path d="M380.0 264.75 L380.0 283.75 L382.5 286.25 L401.25 286.88" stroke-width="1.6"/><path d="M435.62 253.12 L435.62 271.88" stroke-width="1.6"/><path d="M435.62 260.62 L445.0 260.62" stroke-width="1.6"/><path d="M410.0 271.88 L421.25 271.88" stroke-width="1.6"/><path d="M460.0 250.0 L460.0 260.62" stroke-width="1.6"/><path d="M456.25 276.88 L442.5 282.75 L424.38 291.0 L417.5 291.88 L323.75 291.88" stroke-width="1.6"/><path d="M395.0 286.88 L400.62 286.88" stroke-width="1.6"/></g><g fill="none" stroke="#b6342c" stroke-linecap="round" stroke-linejoin="round" opacity="0.95"><path d="M191.88 135.0 L204.75 135.0" stroke-width="1.6"/><path d="M223.12 167.5 L212.12 156.25 L212.12 129.38 L215.25 125.62 L240.0 125.62 L243.5 129.0 L243.5 134.75" stroke-width="1.6"/><path d="M175.0 150.0 L191.88 150.0" stroke-width="1.6"/><path d="M236.25 149.75 L236.25 165.0" stroke-width="1.6"/><path d="M253.75 125.25 L255.0 124.25 L257.5 124.0 L345.0 124.0" stroke-width="1.6" stroke="#ac2c46"/><path d="M273.5 146.0 L275.62 144.0 L292.5 144.0 L300.62 146.0" stroke-width="1.6"/><path d="M281.88 151.25 L287.75 151.25 L291.88 153.75" stroke-width="1.6"/><path d="M291.88 153.75 L296.25 158.12 L315.0 158.12 L324.38 159.75" stroke-width="1.6"/><path d="M313.75 153.75 L320.0 151.88 L331.25 149.75 L345.0 148.5" stroke-width="1.6"/><path d="M335.0 124.0 L412.5 124.0 L416.0 126.5 L416.88 131.25 L416.88 165.0" stroke-width="1.6" stroke="#ae2c40"/><path d="M344.38 139.38 L353.12 139.38 L358.12 133.5" stroke-width="1.6"/><path d="M353.75 139.38 L354.38 147.75" stroke-width="1.6"/><path d="M335.0 149.75 L344.38 149.75" stroke-width="1.6"/><path d="M387.5 129.38 L386.25 146.25" stroke-width="1.6"/><path d="M354.38 162.25 L356.88 160.62 L385.0 160.62" stroke-width="1.6"/><path d="M431.88 134.38 L431.88 147.75" stroke-width="1.6"/><path d="M446.5 127.5 L446.5 165.0" stroke-width="1.6"/><path d="M446.5 155.25 L460.0 155.25 L460.0 165.0" stroke-width="1.6"/><path d="M192.0 150.0 L172.0 150.0 L168.0 151.5 L166.2 155.0 L166.0 160.0 L166.0 250.0 L166.6 254.5 L169.0 257.3 L173.0 258.0 L186.0 258.0 L190.5 259.2 L193.2 262.0 L193.8 266.0 L193.8 285.0 L194.8 289.0 L197.5 291.2 L201.5 291.9 L427.5 291.9 L450.2 271.0 L450.2 255.0" stroke-width="1.6"/><path d="M223.12 167.25 L223.12 210.0" stroke-width="1.6"/><path d="M175.0 186.88 L179.38 190.0 L183.12 192.75 L187.25 194.75" stroke-width="1.6"/><path d="M236.25 152.5 L236.25 172.5" stroke-width="1.6"/><path d="M251.25 155.0 L251.25 172.5" stroke-width="1.6"/><path d="M251.25 173.12 L263.75 172.5 L274.38 172.5 L276.5 174.38 L276.5 180.0" stroke-width="1.6"/><path d="M258.12 183.12 L258.12 191.25 L259.38 194.75" stroke-width="1.6"/><path d="M258.12 186.0 L263.75 186.88" stroke-width="1.6"/><path d="M276.25 189.0 L281.0 193.75 L291.0 194.75" stroke-width="1.6"/><path d="M259.38 194.75 L265.0 196.5 L271.25 197.5" stroke-width="1.6"/><path d="M271.25 204.75 L291.0 204.75" stroke-width="1.6"/><path d="M291.88 168.75 L291.88 172.25 L304.12 172.25" stroke-width="1.6"/><path d="M304.12 179.38 L315.62 181.0" stroke-width="1.6"/><path d="M345.38 173.75 L352.5 173.5 L358.12 168.12 L400.62 168.12 L402.88 165.0 L404.0 161.25" stroke-width="1.6"/><path d="M330.0 181.25 L330.0 203.12 L325.62 203.12" stroke-width="1.6"/><path d="M336.0 201.25 L347.25 201.25" stroke-width="1.6"/><path d="M343.5 181.25 L343.5 201.25" stroke-width="1.6"/><path d="M395.0 175.62 L395.0 197.5" stroke-width="1.6"/><path d="M395.0 186.88 L402.5 186.88" stroke-width="1.6"/><path d="M417.25 160.0 L417.25 186.25" stroke-width="1.6"/><path d="M431.88 170.0 L431.88 199.75" stroke-width="1.6"/><path d="M453.75 176.0 L453.75 210.0" stroke-width="1.6"/><path d="M460.0 160.0 L460.0 210.0" stroke-width="1.6"/><path d="M177.25 217.5 L187.25 217.5" stroke-width="1.6"/><path d="M223.12 205.0 L223.12 255.0" stroke-width="1.6"/><path d="M223.12 241.88 L236.25 242.25" stroke-width="1.6"/><path d="M175.0 234.0 L180.0 236.25 L189.38 236.25" stroke-width="1.6"/><path d="M189.38 228.75 L199.38 229.12 L204.38 233.12 L205.0 240.25" stroke-width="1.6"/><path d="M181.25 243.75 L189.38 243.75" stroke-width="1.6"/><path d="M212.25 240.25 L213.75 242.5 L213.75 255.0" stroke-width="1.6"/><path d="M259.38 215.0 L260.0 228.12" stroke-width="1.6"/><path d="M271.25 212.5 L271.25 220.0" stroke-width="1.6"/><path d="M280.62 212.75 L291.0 215.0" stroke-width="1.6"/><path d="M271.25 220.0 L278.75 220.0" stroke-width="1.6"/><path d="M269.38 242.25 L277.5 244.0 L285.62 246.0" stroke-width="1.6"/><path d="M285.62 238.5 L293.75 238.5 L303.12 245.25 L325.0 245.62" stroke-width="1.6"/><path d="M302.5 250.62 L313.75 251.25 L321.25 253.12" stroke-width="1.6"/><path d="M315.0 216.25 L336.0 216.5 L339.38 223.75" stroke-width="1.6"/><path d="M346.88 216.5 L359.0 215.25" stroke-width="1.6"/><path d="M401.0 206.25 L401.0 223.75" stroke-width="1.6"/><path d="M315.0 245.62 L322.5 245.62" stroke-width="1.6"/><path d="M345.0 245.62 L334.38 246.0 L330.62 249.38 L330.0 255.0" stroke-width="1.6"/><path d="M315.0 249.38 L317.5 253.12 L322.5 253.12" stroke-width="1.6"/><path d="M368.75 240.62 L360.0 240.25 L358.12 242.5 L358.12 253.12" stroke-width="1.6"/><path d="M388.75 240.62 L393.12 236.25 L398.5 231.25" stroke-width="1.6"/><path d="M453.75 205.0 L453.75 210.62 L450.0 215.62 L450.0 255.0" stroke-width="1.6"/><path d="M460.0 205.0 L460.0 215.62 L456.25 220.62 L456.25 255.0" stroke-width="1.6"/><path d="M400.62 205.62 L400.62 223.75" stroke-width="1.6"/><path d="M400.62 220.62 L411.25 219.0 L421.25 216.5" stroke-width="1.6"/><path d="M406.0 236.25 L415.0 242.75 L415.62 247.5 L415.62 255.0" stroke-width="1.6"/><path d="M206.5 254.38 L206.5 263.75 L209.38 267.5 L226.88 267.75 L230.0 270.62 L230.0 281.25" stroke-width="1.6"/><path d="M269.38 257.5 L267.75 269.38" stroke-width="1.6"/><path d="M260.0 253.12 L260.0 269.38" stroke-width="1.6"/><path d="M241.88 282.75 L258.12 282.75 L260.0 280.62 L260.0 276.88" stroke-width="1.6"/><path d="M278.5 269.38 L278.5 291.88" stroke-width="1.6"/><path d="M278.5 255.0 L285.62 253.12" stroke-width="1.6"/><path d="M299.38 276.88 L310.62 276.88 L311.5 278.75 L311.5 284.0" stroke-width="1.6"/><path d="M321.88 291.88 L321.88 276.88 L325.0 274.38" stroke-width="1.6"/><path d="M300.62 266.0 L313.75 266.0" stroke-width="1.6"/><path d="M330.0 250.0 L330.0 272.75 L327.5 275.0 L320.62 275.62 L318.75 278.5 L318.75 283.75" stroke-width="1.6"/><path d="M345.0 260.62 L338.12 260.62 L335.25 263.5 L335.0 276.88" stroke-width="1.6"/><path d="M345.0 260.62 L358.12 260.62" stroke-width="1.6"/><path d="M388.75 261.5 L395.0 271.25" stroke-width="1.6"/><path d="M387.5 280.62 L395.0 280.62" stroke-width="1.6"/><path d="M415.62 250.0 L415.62 286.88" stroke-width="1.6"/><path d="M456.25 250.0 L456.25 276.88" stroke-width="1.6"/><path d="M322.5 291.9 H427.5 L450.2 271" stroke="#a82c62" stroke-width="1.6"/><path d="M409.75 280.62 L415.62 280.62" stroke-width="1.6"/></g><g fill="none" stroke="#27b327" stroke-width="1.3"><circle cx="333.75" cy="135.62" r="3.6"/><circle cx="333.75" cy="163.12" r="3.6"/><circle cx="196.88" cy="190.62" r="3.6"/><circle cx="197.25" cy="218.75" r="3.6"/><circle cx="249.12" cy="190.62" r="3.6"/><circle cx="249.12" cy="218.75" r="3.6"/><circle cx="300.62" cy="190.62" r="3.6"/><circle cx="300.62" cy="218.75" r="3.6"/><circle cx="369.38" cy="190.62" r="3.6"/><circle cx="369.38" cy="218.75" r="3.6"/><circle cx="378.75" cy="236.88" r="3.6"/><circle cx="378.75" cy="265.0" r="3.6"/></g><g fill="#27b327"><circle cx="191.88" cy="127.5" r="2.5"/><circle cx="191.88" cy="135.0" r="2.5"/><circle cx="204.75" cy="135.0" r="2.5"/><circle cx="219.38" cy="135.0" r="2.5"/><ellipse cx="228.75" cy="134.75" rx="2.1" ry="3.6"/><ellipse cx="236.25" cy="134.75" rx="2.1" ry="3.6"/><ellipse cx="243.5" cy="134.75" rx="2.1" ry="3.6"/><circle cx="191.88" cy="150.0" r="2.5"/><circle cx="206.88" cy="150.0" r="2.5"/><ellipse cx="221.25" cy="149.75" rx="2.1" ry="3.6"/><ellipse cx="228.75" cy="149.75" rx="2.1" ry="3.6"/><ellipse cx="236.25" cy="149.75" rx="2.1" ry="3.6"/><circle cx="243.5" cy="151.5" r="2.5"/><circle cx="251.0" cy="151.5" r="2.5"/><circle cx="258.5" cy="131.25" r="2.5"/><circle cx="258.5" cy="145.62" r="2.5"/><circle cx="266.0" cy="133.12" r="2.5"/><circle cx="266.0" cy="147.75" r="2.5"/><circle cx="273.5" cy="131.25" r="2.5"/><circle cx="273.5" cy="146.0" r="2.5"/><ellipse cx="281.88" cy="144.0" rx="3.2" ry="2.0"/><ellipse cx="281.88" cy="151.25" rx="3.2" ry="2.0"/><ellipse cx="281.88" cy="158.5" rx="3.2" ry="2.0"/><circle cx="291.88" cy="131.25" r="2.5"/><circle cx="291.88" cy="146.0" r="2.5"/><circle cx="300.62" cy="131.25" r="2.5"/><circle cx="300.62" cy="138.75" r="2.5"/><circle cx="300.62" cy="146.0" r="2.5"/><circle cx="315.62" cy="131.25" r="2.5"/><circle cx="315.62" cy="138.75" r="2.5"/><circle cx="315.62" cy="146.0" r="2.5"/><circle cx="291.88" cy="153.75" r="2.5"/><circle cx="299.38" cy="153.75" r="2.5"/><circle cx="313.75" cy="153.75" r="2.5"/><circle cx="324.38" cy="139.38" r="2.5"/><circle cx="324.38" cy="159.75" r="2.5"/><circle cx="345.0" cy="138.75" r="2.5"/><circle cx="345.0" cy="148.5" r="2.5"/><circle cx="344.38" cy="159.75" r="2.5"/><circle cx="358.12" cy="133.5" r="2.5"/><circle cx="373.12" cy="133.5" r="2.5"/><circle cx="358.12" cy="142.5" r="2.5"/><circle cx="373.12" cy="142.5" r="2.5"/><circle cx="387.5" cy="129.38" r="2.6"/><circle cx="395.0" cy="129.38" r="2.6"/><circle cx="402.5" cy="129.38" r="2.6"/><circle cx="354.38" cy="147.75" r="2.5"/><circle cx="354.38" cy="162.25" r="2.5"/><ellipse cx="372.5" cy="151.25" rx="3.7" ry="2.5"/><circle cx="386.25" cy="146.25" r="2.5"/><circle cx="386.25" cy="160.62" r="2.5"/><circle cx="395.0" cy="142.25" r="2.5"/><circle cx="395.0" cy="157.5" r="2.5"/><circle cx="404.38" cy="146.25" r="2.5"/><circle cx="404.38" cy="161.25" r="2.5"/><circle cx="417.5" cy="135.0" r="2.5"/><circle cx="425.0" cy="135.0" r="2.5"/><circle cx="416.88" cy="162.5" r="2.5"/><circle cx="432.25" cy="127.5" r="2.5"/><circle cx="446.5" cy="127.5" r="2.5"/><circle cx="435.62" cy="135.0" r="2.5"/><circle cx="450.0" cy="135.0" r="2.5"/><ellipse cx="439.38" cy="145.62" rx="2.1" ry="3.6"/><ellipse cx="446.5" cy="145.62" rx="2.1" ry="3.6"/><ellipse cx="453.75" cy="145.62" rx="2.1" ry="3.6"/><circle cx="424.38" cy="147.75" r="2.5"/><circle cx="431.88" cy="147.75" r="2.5"/><circle cx="432.25" cy="155.25" r="2.5"/><circle cx="446.5" cy="155.25" r="2.5"/><circle cx="446.5" cy="162.5" r="2.5"/><circle cx="453.75" cy="161.25" r="2.5"/><circle cx="417.25" cy="162.5" r="2.5"/><circle cx="431.88" cy="162.5" r="2.5"/><ellipse cx="177.25" cy="162.5" rx="3.6" ry="2.5"/><circle cx="193.75" cy="162.5" r="2.5"/><circle cx="193.75" cy="170.0" r="2.5"/><circle cx="211.88" cy="162.5" r="2.5"/><circle cx="211.88" cy="170.0" r="2.5"/><ellipse cx="175.0" cy="186.88" rx="2.4" ry="3.6"/><circle cx="187.25" cy="194.75" r="2.5"/><circle cx="207.25" cy="194.75" r="2.5"/><circle cx="207.25" cy="204.38" r="2.5"/><circle cx="177.25" cy="203.12" r="2.5"/><circle cx="215.62" cy="188.5" r="2.5"/><circle cx="230.62" cy="188.5" r="2.5"/><circle cx="218.12" cy="195.62" r="2.5"/><circle cx="218.12" cy="210.0" r="2.5"/><circle cx="228.75" cy="195.62" r="2.5"/><circle cx="228.75" cy="210.0" r="2.5"/><circle cx="228.75" cy="162.5" r="2.5"/><circle cx="243.12" cy="183.12" r="2.5"/><ellipse cx="236.25" cy="173.12" rx="2.1" ry="3.4"/><ellipse cx="243.75" cy="173.12" rx="2.1" ry="3.4"/><ellipse cx="251.25" cy="173.12" rx="2.1" ry="3.4"/><circle cx="243.75" cy="162.5" r="2.5"/><circle cx="263.75" cy="171.88" r="2.5"/><circle cx="263.75" cy="186.88" r="2.5"/><circle cx="243.75" cy="183.12" r="2.5"/><circle cx="258.12" cy="183.12" r="2.5"/><ellipse cx="276.25" cy="180.0" rx="3.2" ry="2.1"/><ellipse cx="276.25" cy="189.0" rx="3.2" ry="2.1"/><ellipse cx="271.25" cy="197.5" rx="3.4" ry="2.1"/><ellipse cx="271.25" cy="204.75" rx="3.4" ry="2.1"/><circle cx="280.62" cy="197.5" r="2.5"/><circle cx="239.75" cy="194.75" r="2.5"/><circle cx="239.75" cy="205.0" r="2.5"/><circle cx="259.38" cy="194.75" r="2.5"/><circle cx="291.0" cy="194.75" r="2.5"/><circle cx="291.0" cy="204.75" r="2.5"/><circle cx="311.25" cy="194.75" r="2.5"/><circle cx="304.12" cy="164.38" r="2.6"/><circle cx="304.12" cy="172.25" r="2.6"/><circle cx="304.12" cy="179.38" r="2.6"/><circle cx="291.88" cy="168.75" r="2.5"/><ellipse cx="291.5" cy="176.88" rx="3.4" ry="2.3"/><circle cx="315.62" cy="181.0" r="2.5"/><circle cx="330.0" cy="173.75" r="2.5"/><circle cx="345.38" cy="173.75" r="2.5"/><circle cx="316.25" cy="181.25" r="2.5"/><circle cx="330.0" cy="181.25" r="2.5"/><circle cx="343.5" cy="181.25" r="2.5"/><circle cx="358.12" cy="181.25" r="2.5"/><circle cx="336.0" cy="188.5" r="2.5"/><circle cx="350.62" cy="188.5" r="2.5"/><circle cx="336.0" cy="196.0" r="2.5"/><circle cx="350.62" cy="196.0" r="2.5"/><circle cx="336.0" cy="201.25" r="2.5"/><circle cx="347.25" cy="201.25" r="2.5"/><circle cx="365.62" cy="173.5" r="2.5"/><circle cx="373.12" cy="173.5" r="2.5"/><circle cx="369.38" cy="179.38" r="2.5"/><circle cx="382.5" cy="166.25" r="2.5"/><circle cx="382.5" cy="181.25" r="2.5"/><circle cx="380.25" cy="186.88" r="2.5"/><circle cx="395.0" cy="186.88" r="2.5"/><circle cx="395.0" cy="175.62" r="2.5"/><circle cx="395.0" cy="197.5" r="2.5"/><circle cx="359.38" cy="194.75" r="2.5"/><circle cx="359.38" cy="204.75" r="2.5"/><circle cx="379.0" cy="194.75" r="2.5"/><circle cx="324.75" cy="195.62" r="2.8"/><circle cx="324.75" cy="203.12" r="2.8"/><circle cx="324.75" cy="209.75" r="2.8"/><circle cx="400.62" cy="205.0" r="2.5"/><circle cx="417.25" cy="170.0" r="2.5"/><circle cx="431.88" cy="170.0" r="2.5"/><circle cx="395.62" cy="176.0" r="2.5"/><circle cx="409.75" cy="176.0" r="2.5"/><circle cx="424.38" cy="177.5" r="2.5"/><circle cx="439.38" cy="177.5" r="2.5"/><circle cx="446.5" cy="162.5" r="2.5"/><circle cx="446.5" cy="177.5" r="2.5"/><circle cx="453.75" cy="161.25" r="2.5"/><circle cx="453.75" cy="176.0" r="2.5"/><ellipse cx="401.88" cy="186.25" rx="2.1" ry="3.6"/><ellipse cx="409.38" cy="186.25" rx="2.1" ry="3.6"/><ellipse cx="416.88" cy="186.25" rx="2.1" ry="3.6"/><ellipse cx="424.38" cy="186.25" rx="2.1" ry="3.6"/><ellipse cx="431.88" cy="186.25" rx="2.1" ry="3.6"/><ellipse cx="439.0" cy="186.25" rx="2.1" ry="3.6"/><ellipse cx="446.5" cy="186.25" rx="2.1" ry="3.6"/><circle cx="395.62" cy="198.12" r="2.5"/><circle cx="409.75" cy="198.12" r="2.5"/><circle cx="417.25" cy="199.75" r="2.5"/><circle cx="431.88" cy="199.75" r="2.5"/><circle cx="400.62" cy="205.25" r="2.5"/><circle cx="415.62" cy="205.25" r="2.5"/><circle cx="187.25" cy="215.0" r="2.5"/><circle cx="207.25" cy="215.0" r="2.5"/><circle cx="177.25" cy="217.5" r="2.5"/><ellipse cx="175.0" cy="231.25" rx="3.8" ry="2.6"/><ellipse cx="189.38" cy="228.75" rx="3.4" ry="2.0"/><ellipse cx="189.38" cy="236.25" rx="3.4" ry="2.0"/><ellipse cx="189.38" cy="243.75" rx="3.4" ry="2.0"/><circle cx="181.25" cy="243.75" r="2.5"/><circle cx="205.0" cy="240.25" r="2.5"/><circle cx="212.25" cy="240.25" r="2.5"/><circle cx="225.62" cy="231.25" r="2.5"/><circle cx="233.12" cy="231.25" r="2.5"/><circle cx="236.25" cy="242.25" r="2.5"/><circle cx="239.75" cy="215.0" r="2.5"/><circle cx="259.38" cy="215.0" r="2.5"/><circle cx="291.0" cy="215.0" r="2.5"/><circle cx="311.25" cy="215.0" r="2.5"/><circle cx="245.0" cy="228.12" r="2.5"/><circle cx="260.0" cy="228.12" r="2.5"/><circle cx="245.0" cy="235.0" r="2.5"/><circle cx="260.0" cy="235.0" r="2.5"/><circle cx="245.0" cy="243.75" r="2.5"/><circle cx="260.0" cy="243.75" r="2.5"/><circle cx="245.0" cy="253.12" r="2.5"/><circle cx="260.0" cy="253.12" r="2.5"/><ellipse cx="271.25" cy="212.5" rx="3.2" ry="2.1"/><circle cx="280.62" cy="212.75" r="2.5"/><circle cx="271.25" cy="220.0" r="2.5"/><circle cx="278.75" cy="220.0" r="2.5"/><circle cx="271.25" cy="235.0" r="2.5"/><circle cx="278.75" cy="235.0" r="2.5"/><ellipse cx="285.62" cy="238.5" rx="3.4" ry="2.0"/><ellipse cx="285.62" cy="246.0" rx="3.4" ry="2.0"/><ellipse cx="285.62" cy="253.12" rx="3.4" ry="2.0"/><circle cx="269.38" cy="242.25" r="2.5"/><circle cx="302.5" cy="236.88" r="2.5"/><circle cx="302.5" cy="250.62" r="2.5"/><circle cx="315.0" cy="223.75" r="2.5"/><circle cx="315.0" cy="238.12" r="2.5"/><circle cx="313.75" cy="251.25" r="2.5"/><ellipse cx="322.5" cy="245.62" rx="3.2" ry="2.1"/><ellipse cx="322.5" cy="253.12" rx="3.2" ry="2.1"/><circle cx="236.25" cy="241.88" r="2.5"/><circle cx="336.0" cy="216.5" r="2.5"/><circle cx="346.88" cy="216.5" r="2.5"/><circle cx="359.0" cy="215.0" r="2.5"/><circle cx="379.75" cy="215.0" r="2.5"/><circle cx="391.25" cy="214.0" r="2.5"/><circle cx="339.38" cy="223.75" r="2.5"/><circle cx="354.38" cy="223.75" r="2.5"/><circle cx="386.0" cy="223.75" r="2.5"/><circle cx="401.25" cy="223.75" r="2.5"/><circle cx="360.0" cy="225.0" r="2.5"/><circle cx="360.0" cy="240.25" r="2.5"/><circle cx="328.75" cy="223.75" r="2.6"/><circle cx="328.75" cy="237.75" r="2.6"/><circle cx="338.12" cy="236.25" r="2.5"/><circle cx="352.88" cy="236.25" r="2.5"/><ellipse cx="322.5" cy="245.62" rx="3.7" ry="2.2"/><ellipse cx="322.5" cy="253.12" rx="3.7" ry="2.2"/><ellipse cx="345.0" cy="245.62" rx="3.7" ry="2.2"/><ellipse cx="345.0" cy="253.12" rx="3.7" ry="2.2"/><circle cx="368.75" cy="240.62" r="2.5"/><circle cx="368.75" cy="251.0" r="2.5"/><circle cx="388.75" cy="240.62" r="2.5"/><circle cx="398.5" cy="231.25" r="2.5"/><circle cx="398.5" cy="245.0" r="2.5"/><circle cx="401.25" cy="249.38" r="2.5"/><circle cx="358.12" cy="253.12" r="2.5"/><circle cx="421.25" cy="216.5" r="2.5"/><circle cx="435.62" cy="216.5" r="2.5"/><circle cx="421.25" cy="235.25" r="2.5"/><circle cx="435.62" cy="235.25" r="2.5"/><circle cx="421.25" cy="254.0" r="2.5"/><circle cx="435.62" cy="254.0" r="2.5"/><circle cx="406.0" cy="214.38" r="2.5"/><circle cx="406.0" cy="221.25" r="2.5"/><circle cx="400.62" cy="223.75" r="2.5"/><circle cx="398.75" cy="231.25" r="2.5"/><circle cx="406.0" cy="236.25" r="2.5"/><circle cx="398.75" cy="245.62" r="2.5"/><circle cx="400.62" cy="249.38" r="2.5"/><circle cx="408.12" cy="249.38" r="2.5"/><circle cx="445.0" cy="227.5" r="2.5"/><circle cx="460.0" cy="227.5" r="2.5"/><circle cx="445.0" cy="243.75" r="2.5"/><circle cx="460.0" cy="243.75" r="2.5"/><ellipse cx="173.5" cy="258.12" rx="2.6" ry="3.6"/><circle cx="181.0" cy="258.12" r="2.5"/><circle cx="188.12" cy="253.75" r="2.5"/><circle cx="188.12" cy="268.12" r="2.5"/><ellipse cx="199.0" cy="254.38" rx="2.1" ry="3.6"/><ellipse cx="206.5" cy="254.38" rx="2.1" ry="3.6"/><ellipse cx="213.75" cy="254.38" rx="2.1" ry="3.6"/><ellipse cx="221.25" cy="254.38" rx="2.1" ry="3.6"/><ellipse cx="199.0" cy="276.88" rx="2.1" ry="3.6"/><ellipse cx="206.5" cy="276.88" rx="2.1" ry="3.6"/><ellipse cx="213.75" cy="276.88" rx="2.1" ry="3.6"/><ellipse cx="221.25" cy="276.88" rx="2.1" ry="3.6"/><circle cx="181.0" cy="276.88" r="2.6"/><circle cx="188.12" cy="276.88" r="2.6"/><circle cx="232.5" cy="260.62" r="2.5"/><circle cx="240.0" cy="260.62" r="2.5"/><circle cx="232.5" cy="275.62" r="2.5"/><circle cx="240.0" cy="275.62" r="2.5"/><circle cx="236.25" cy="256.25" r="2.5"/><circle cx="226.88" cy="282.75" r="2.5"/><circle cx="241.88" cy="282.75" r="2.5"/><circle cx="269.38" cy="257.5" r="2.5"/><circle cx="252.5" cy="269.38" r="2.6"/><circle cx="260.0" cy="269.38" r="2.6"/><circle cx="267.75" cy="269.38" r="2.6"/><circle cx="252.5" cy="276.88" r="2.6"/><circle cx="260.0" cy="276.88" r="2.6"/><circle cx="267.75" cy="276.88" r="2.6"/><circle cx="278.5" cy="255.0" r="2.5"/><circle cx="278.5" cy="269.38" r="2.5"/><circle cx="278.5" cy="284.0" r="2.5"/><ellipse cx="285.62" cy="253.12" rx="3.2" ry="2.1"/><circle cx="284.38" cy="276.88" r="2.5"/><circle cx="299.38" cy="276.88" r="2.5"/><circle cx="293.12" cy="284.0" r="2.5"/><ellipse cx="304.12" cy="284.0" rx="2.1" ry="3.4"/><ellipse cx="311.5" cy="284.0" rx="2.1" ry="3.4"/><ellipse cx="319.0" cy="284.0" rx="2.1" ry="3.4"/><ellipse cx="300.62" cy="266.0" rx="3.5" ry="2.3"/><circle cx="313.75" cy="251.88" r="2.5"/><circle cx="313.75" cy="266.0" r="2.5"/><ellipse cx="322.5" cy="253.12" rx="3.4" ry="2.0"/><ellipse cx="322.5" cy="260.62" rx="3.4" ry="2.0"/><ellipse cx="322.5" cy="268.12" rx="3.4" ry="2.0"/><ellipse cx="322.5" cy="260.62" rx="3.7" ry="2.2"/><ellipse cx="322.5" cy="268.12" rx="3.7" ry="2.2"/><ellipse cx="345.0" cy="260.62" rx="3.7" ry="2.2"/><ellipse cx="345.0" cy="268.12" rx="3.7" ry="2.2"/><circle cx="358.12" cy="253.12" r="2.5"/><circle cx="358.12" cy="268.12" r="2.5"/><circle cx="349.38" cy="273.12" r="2.5"/><circle cx="363.75" cy="273.12" r="2.5"/><circle cx="354.75" cy="279.38" r="2.5"/><circle cx="369.38" cy="279.38" r="2.5"/><circle cx="351.25" cy="286.5" r="2.5"/><circle cx="365.62" cy="286.5" r="2.5"/><ellipse cx="328.12" cy="282.25" rx="2.1" ry="3.4"/><ellipse cx="335.62" cy="282.25" rx="2.1" ry="3.4"/><ellipse cx="343.12" cy="282.25" rx="2.1" ry="3.4"/><circle cx="368.75" cy="261.5" r="2.5"/><circle cx="388.75" cy="261.5" r="2.5"/><circle cx="373.12" cy="273.12" r="2.5"/><circle cx="387.5" cy="273.12" r="2.5"/><circle cx="373.12" cy="280.62" r="2.5"/><circle cx="387.5" cy="280.62" r="2.5"/><circle cx="395.0" cy="271.88" r="2.5"/><circle cx="395.0" cy="280.62" r="2.5"/><circle cx="401.25" cy="263.75" r="2.5"/><circle cx="401.25" cy="286.88" r="2.5"/><circle cx="401.25" cy="250.62" r="2.5"/><circle cx="421.25" cy="271.88" r="2.5"/><circle cx="435.62" cy="271.88" r="2.5"/><circle cx="445.0" cy="260.62" r="2.5"/><circle cx="460.0" cy="260.62" r="2.5"/><circle cx="456.25" cy="276.88" r="2.5"/><circle cx="400.62" cy="264.75" r="2.5"/><circle cx="408.12" cy="264.75" r="2.5"/><circle cx="400.62" cy="250.62" r="2.5"/><circle cx="408.12" cy="250.62" r="2.5"/><circle cx="395.62" cy="271.88" r="2.5"/><circle cx="409.75" cy="271.88" r="2.5"/><circle cx="395.62" cy="280.62" r="2.5"/><circle cx="409.75" cy="280.62" r="2.5"/><circle cx="400.62" cy="286.88" r="2.5"/><circle cx="415.62" cy="286.88" r="2.5"/></g><g fill="#8fd88f"><circle cx="191.88" cy="127.5" r="0.75"/><circle cx="191.88" cy="135.0" r="0.75"/><circle cx="204.75" cy="135.0" r="0.75"/><circle cx="219.38" cy="135.0" r="0.75"/><circle cx="228.75" cy="134.75" r="0.75"/><circle cx="236.25" cy="134.75" r="0.75"/><circle cx="243.5" cy="134.75" r="0.75"/><circle cx="191.88" cy="150.0" r="0.75"/><circle cx="206.88" cy="150.0" r="0.75"/><circle cx="221.25" cy="149.75" r="0.75"/><circle cx="228.75" cy="149.75" r="0.75"/><circle cx="236.25" cy="149.75" r="0.75"/><circle cx="243.5" cy="151.5" r="0.75"/><circle cx="251.0" cy="151.5" r="0.75"/><circle cx="258.5" cy="131.25" r="0.75"/><circle cx="258.5" cy="145.62" r="0.75"/><circle cx="266.0" cy="133.12" r="0.75"/><circle cx="266.0" cy="147.75" r="0.75"/><circle cx="273.5" cy="131.25" r="0.75"/><circle cx="273.5" cy="146.0" r="0.75"/><circle cx="281.88" cy="144.0" r="0.75"/><circle cx="281.88" cy="151.25" r="0.75"/><circle cx="281.88" cy="158.5" r="0.75"/><circle cx="291.88" cy="131.25" r="0.75"/><circle cx="291.88" cy="146.0" r="0.75"/><circle cx="300.62" cy="131.25" r="0.75"/><circle cx="300.62" cy="138.75" r="0.75"/><circle cx="300.62" cy="146.0" r="0.75"/><circle cx="315.62" cy="131.25" r="0.75"/><circle cx="315.62" cy="138.75" r="0.75"/><circle cx="315.62" cy="146.0" r="0.75"/><circle cx="291.88" cy="153.75" r="0.75"/><circle cx="299.38" cy="153.75" r="0.75"/><circle cx="313.75" cy="153.75" r="0.75"/><circle cx="324.38" cy="139.38" r="1.1" fill="#1a3a20"/><circle cx="324.38" cy="139.38" r="0.7" fill="#ecc0d4"/><circle cx="324.38" cy="159.75" r="1.1" fill="#1a3a20"/><circle cx="324.38" cy="159.75" r="0.7" fill="#ecc0d4"/><circle cx="345.0" cy="138.75" r="1.1" fill="#1a3a20"/><circle cx="345.0" cy="138.75" r="0.7" fill="#ecc0d4"/><circle cx="345.0" cy="148.5" r="1.1" fill="#1a3a20"/><circle cx="345.0" cy="148.5" r="0.7" fill="#ecc0d4"/><circle cx="344.38" cy="159.75" r="1.1" fill="#1a3a20"/><circle cx="344.38" cy="159.75" r="0.7" fill="#ecc0d4"/><circle cx="358.12" cy="133.5" r="0.75"/><circle cx="373.12" cy="133.5" r="0.75"/><circle cx="358.12" cy="142.5" r="0.75"/><circle cx="373.12" cy="142.5" r="0.75"/><circle cx="387.5" cy="129.38" r="1.1" fill="#1a3a20"/><circle cx="387.5" cy="129.38" r="0.7" fill="#ecc0d4"/><circle cx="395.0" cy="129.38" r="1.1" fill="#1a3a20"/><circle cx="395.0" cy="129.38" r="0.7" fill="#ecc0d4"/><circle cx="402.5" cy="129.38" r="1.1" fill="#1a3a20"/><circle cx="402.5" cy="129.38" r="0.7" fill="#ecc0d4"/><circle cx="354.38" cy="147.75" r="0.75"/><circle cx="354.38" cy="162.25" r="0.75"/><circle cx="372.5" cy="151.25" r="0.75"/><circle cx="386.25" cy="146.25" r="0.75"/><circle cx="386.25" cy="160.62" r="0.75"/><circle cx="395.0" cy="142.25" r="0.75"/><circle cx="395.0" cy="157.5" r="0.75"/><circle cx="404.38" cy="146.25" r="0.75"/><circle cx="404.38" cy="161.25" r="0.75"/><circle cx="417.5" cy="135.0" r="0.75"/><circle cx="425.0" cy="135.0" r="0.75"/><circle cx="416.88" cy="162.5" r="0.75"/><circle cx="432.25" cy="127.5" r="0.75"/><circle cx="446.5" cy="127.5" r="0.75"/><circle cx="435.62" cy="135.0" r="0.75"/><circle cx="450.0" cy="135.0" r="0.75"/><circle cx="439.38" cy="145.62" r="0.75"/><circle cx="446.5" cy="145.62" r="0.75"/><circle cx="453.75" cy="145.62" r="0.75"/><circle cx="424.38" cy="147.75" r="0.75"/><circle cx="431.88" cy="147.75" r="0.75"/><circle cx="432.25" cy="155.25" r="0.75"/><circle cx="446.5" cy="155.25" r="0.75"/><circle cx="446.5" cy="162.5" r="0.75"/><circle cx="453.75" cy="161.25" r="0.75"/><circle cx="417.25" cy="162.5" r="0.75"/><circle cx="431.88" cy="162.5" r="0.75"/><circle cx="177.25" cy="162.5" r="0.75"/><circle cx="193.75" cy="162.5" r="0.75"/><circle cx="193.75" cy="170.0" r="0.75"/><circle cx="211.88" cy="162.5" r="0.75"/><circle cx="211.88" cy="170.0" r="0.75"/><circle cx="175.0" cy="186.88" r="0.75"/><circle cx="187.25" cy="194.75" r="1.1" fill="#1a3a20"/><circle cx="187.25" cy="194.75" r="0.7" fill="#ecc0d4"/><circle cx="207.25" cy="194.75" r="1.1" fill="#1a3a20"/><circle cx="207.25" cy="194.75" r="0.7" fill="#ecc0d4"/><circle cx="207.25" cy="204.38" r="1.1" fill="#1a3a20"/><circle cx="207.25" cy="204.38" r="0.7" fill="#ecc0d4"/><circle cx="177.25" cy="203.12" r="0.75"/><circle cx="215.62" cy="188.5" r="0.75"/><circle cx="230.62" cy="188.5" r="0.75"/><circle cx="218.12" cy="195.62" r="0.75"/><circle cx="218.12" cy="210.0" r="0.75"/><circle cx="228.75" cy="195.62" r="0.75"/><circle cx="228.75" cy="210.0" r="0.75"/><circle cx="228.75" cy="162.5" r="0.75"/><circle cx="243.12" cy="183.12" r="0.75"/><circle cx="236.25" cy="173.12" r="0.75"/><circle cx="243.75" cy="173.12" r="0.75"/><circle cx="251.25" cy="173.12" r="0.75"/><circle cx="243.75" cy="162.5" r="0.75"/><circle cx="263.75" cy="171.88" r="0.75"/><circle cx="263.75" cy="186.88" r="0.75"/><circle cx="243.75" cy="183.12" r="0.75"/><circle cx="258.12" cy="183.12" r="0.75"/><circle cx="276.25" cy="180.0" r="0.75"/><circle cx="276.25" cy="189.0" r="0.75"/><circle cx="271.25" cy="197.5" r="0.75"/><circle cx="271.25" cy="204.75" r="0.75"/><circle cx="280.62" cy="197.5" r="0.75"/><circle cx="239.75" cy="194.75" r="1.1" fill="#1a3a20"/><circle cx="239.75" cy="194.75" r="0.7" fill="#ecc0d4"/><circle cx="239.75" cy="205.0" r="1.1" fill="#1a3a20"/><circle cx="239.75" cy="205.0" r="0.7" fill="#ecc0d4"/><circle cx="259.38" cy="194.75" r="1.1" fill="#1a3a20"/><circle cx="259.38" cy="194.75" r="0.7" fill="#ecc0d4"/><circle cx="291.0" cy="194.75" r="1.1" fill="#1a3a20"/><circle cx="291.0" cy="194.75" r="0.7" fill="#ecc0d4"/><circle cx="291.0" cy="204.75" r="1.1" fill="#1a3a20"/><circle cx="291.0" cy="204.75" r="0.7" fill="#ecc0d4"/><circle cx="311.25" cy="194.75" r="1.1" fill="#1a3a20"/><circle cx="311.25" cy="194.75" r="0.7" fill="#ecc0d4"/><circle cx="304.12" cy="164.38" r="1.1" fill="#1a3a20"/><circle cx="304.12" cy="164.38" r="0.7" fill="#ecc0d4"/><circle cx="304.12" cy="172.25" r="1.1" fill="#1a3a20"/><circle cx="304.12" cy="172.25" r="0.7" fill="#ecc0d4"/><circle cx="304.12" cy="179.38" r="1.1" fill="#1a3a20"/><circle cx="304.12" cy="179.38" r="0.7" fill="#ecc0d4"/><circle cx="291.88" cy="168.75" r="0.75"/><circle cx="291.5" cy="176.88" r="0.75"/><circle cx="315.62" cy="181.0" r="0.75"/><circle cx="330.0" cy="173.75" r="0.75"/><circle cx="345.38" cy="173.75" r="0.75"/><circle cx="316.25" cy="181.25" r="0.75"/><circle cx="330.0" cy="181.25" r="0.75"/><circle cx="343.5" cy="181.25" r="0.75"/><circle cx="358.12" cy="181.25" r="0.75"/><circle cx="336.0" cy="188.5" r="0.75"/><circle cx="350.62" cy="188.5" r="0.75"/><circle cx="336.0" cy="196.0" r="0.75"/><circle cx="350.62" cy="196.0" r="0.75"/><circle cx="336.0" cy="201.25" r="0.75"/><circle cx="347.25" cy="201.25" r="0.75"/><circle cx="365.62" cy="173.5" r="0.75"/><circle cx="373.12" cy="173.5" r="0.75"/><circle cx="369.38" cy="179.38" r="0.75"/><circle cx="382.5" cy="166.25" r="0.75"/><circle cx="382.5" cy="181.25" r="0.75"/><circle cx="380.25" cy="186.88" r="0.75"/><circle cx="395.0" cy="186.88" r="0.75"/><circle cx="395.0" cy="175.62" r="0.75"/><circle cx="395.0" cy="197.5" r="0.75"/><circle cx="359.38" cy="194.75" r="1.1" fill="#1a3a20"/><circle cx="359.38" cy="194.75" r="0.7" fill="#ecc0d4"/><circle cx="359.38" cy="204.75" r="1.1" fill="#1a3a20"/><circle cx="359.38" cy="204.75" r="0.7" fill="#ecc0d4"/><circle cx="379.0" cy="194.75" r="1.1" fill="#1a3a20"/><circle cx="379.0" cy="194.75" r="0.7" fill="#ecc0d4"/><circle cx="324.75" cy="195.62" r="0.75"/><circle cx="324.75" cy="203.12" r="0.75"/><circle cx="324.75" cy="209.75" r="0.75"/><circle cx="400.62" cy="205.0" r="0.75"/><circle cx="417.25" cy="170.0" r="0.75"/><circle cx="431.88" cy="170.0" r="0.75"/><circle cx="395.62" cy="176.0" r="0.75"/><circle cx="409.75" cy="176.0" r="0.75"/><circle cx="424.38" cy="177.5" r="0.75"/><circle cx="439.38" cy="177.5" r="0.75"/><circle cx="446.5" cy="162.5" r="0.75"/><circle cx="446.5" cy="177.5" r="0.75"/><circle cx="453.75" cy="161.25" r="0.75"/><circle cx="453.75" cy="176.0" r="0.75"/><circle cx="401.88" cy="186.25" r="0.75"/><circle cx="409.38" cy="186.25" r="0.75"/><circle cx="416.88" cy="186.25" r="0.75"/><circle cx="424.38" cy="186.25" r="0.75"/><circle cx="431.88" cy="186.25" r="0.75"/><circle cx="439.0" cy="186.25" r="0.75"/><circle cx="446.5" cy="186.25" r="0.75"/><circle cx="395.62" cy="198.12" r="0.75"/><circle cx="409.75" cy="198.12" r="0.75"/><circle cx="417.25" cy="199.75" r="0.75"/><circle cx="431.88" cy="199.75" r="0.75"/><circle cx="400.62" cy="205.25" r="0.75"/><circle cx="415.62" cy="205.25" r="0.75"/><circle cx="187.25" cy="215.0" r="1.1" fill="#1a3a20"/><circle cx="187.25" cy="215.0" r="0.7" fill="#ecc0d4"/><circle cx="207.25" cy="215.0" r="1.1" fill="#1a3a20"/><circle cx="207.25" cy="215.0" r="0.7" fill="#ecc0d4"/><circle cx="177.25" cy="217.5" r="0.75"/><circle cx="175.0" cy="231.25" r="0.75"/><circle cx="189.38" cy="228.75" r="0.75"/><circle cx="189.38" cy="236.25" r="0.75"/><circle cx="189.38" cy="243.75" r="0.75"/><circle cx="181.25" cy="243.75" r="0.75"/><circle cx="205.0" cy="240.25" r="0.75"/><circle cx="212.25" cy="240.25" r="0.75"/><circle cx="225.62" cy="231.25" r="0.75"/><circle cx="233.12" cy="231.25" r="0.75"/><circle cx="236.25" cy="242.25" r="0.75"/><circle cx="239.75" cy="215.0" r="1.1" fill="#1a3a20"/><circle cx="239.75" cy="215.0" r="0.7" fill="#ecc0d4"/><circle cx="259.38" cy="215.0" r="1.1" fill="#1a3a20"/><circle cx="259.38" cy="215.0" r="0.7" fill="#ecc0d4"/><circle cx="291.0" cy="215.0" r="1.1" fill="#1a3a20"/><circle cx="291.0" cy="215.0" r="0.7" fill="#ecc0d4"/><circle cx="311.25" cy="215.0" r="1.1" fill="#1a3a20"/><circle cx="311.25" cy="215.0" r="0.7" fill="#ecc0d4"/><circle cx="245.0" cy="228.12" r="0.75"/><circle cx="260.0" cy="228.12" r="0.75"/><circle cx="245.0" cy="235.0" r="0.75"/><circle cx="260.0" cy="235.0" r="0.75"/><circle cx="245.0" cy="243.75" r="0.75"/><circle cx="260.0" cy="243.75" r="0.75"/><circle cx="245.0" cy="253.12" r="0.75"/><circle cx="260.0" cy="253.12" r="0.75"/><circle cx="271.25" cy="212.5" r="0.75"/><circle cx="280.62" cy="212.75" r="0.75"/><circle cx="271.25" cy="220.0" r="0.75"/><circle cx="278.75" cy="220.0" r="0.75"/><circle cx="271.25" cy="235.0" r="0.75"/><circle cx="278.75" cy="235.0" r="0.75"/><circle cx="285.62" cy="238.5" r="0.75"/><circle cx="285.62" cy="246.0" r="0.75"/><circle cx="285.62" cy="253.12" r="0.75"/><circle cx="269.38" cy="242.25" r="0.75"/><circle cx="302.5" cy="236.88" r="0.75"/><circle cx="302.5" cy="250.62" r="0.75"/><circle cx="315.0" cy="223.75" r="0.75"/><circle cx="315.0" cy="238.12" r="0.75"/><circle cx="313.75" cy="251.25" r="0.75"/><circle cx="322.5" cy="245.62" r="0.75"/><circle cx="322.5" cy="253.12" r="0.75"/><circle cx="236.25" cy="241.88" r="0.75"/><circle cx="336.0" cy="216.5" r="0.75"/><circle cx="346.88" cy="216.5" r="0.75"/><circle cx="359.0" cy="215.0" r="1.1" fill="#1a3a20"/><circle cx="359.0" cy="215.0" r="0.7" fill="#ecc0d4"/><circle cx="379.75" cy="215.0" r="1.1" fill="#1a3a20"/><circle cx="379.75" cy="215.0" r="0.7" fill="#ecc0d4"/><circle cx="391.25" cy="214.0" r="0.75"/><circle cx="339.38" cy="223.75" r="0.75"/><circle cx="354.38" cy="223.75" r="0.75"/><circle cx="386.0" cy="223.75" r="0.75"/><circle cx="401.25" cy="223.75" r="0.75"/><circle cx="360.0" cy="225.0" r="0.75"/><circle cx="360.0" cy="240.25" r="0.75"/><circle cx="328.75" cy="223.75" r="1.1" fill="#1a3a20"/><circle cx="328.75" cy="223.75" r="0.7" fill="#ecc0d4"/><circle cx="328.75" cy="237.75" r="1.1" fill="#1a3a20"/><circle cx="328.75" cy="237.75" r="0.7" fill="#ecc0d4"/><circle cx="338.12" cy="236.25" r="0.75"/><circle cx="352.88" cy="236.25" r="0.75"/><circle cx="322.5" cy="245.62" r="0.75"/><circle cx="322.5" cy="253.12" r="0.75"/><circle cx="345.0" cy="245.62" r="0.75"/><circle cx="345.0" cy="253.12" r="0.75"/><circle cx="368.75" cy="240.62" r="1.1" fill="#1a3a20"/><circle cx="368.75" cy="240.62" r="0.7" fill="#ecc0d4"/><circle cx="368.75" cy="251.0" r="1.1" fill="#1a3a20"/><circle cx="368.75" cy="251.0" r="0.7" fill="#ecc0d4"/><circle cx="388.75" cy="240.62" r="1.1" fill="#1a3a20"/><circle cx="388.75" cy="240.62" r="0.7" fill="#ecc0d4"/><circle cx="398.5" cy="231.25" r="0.75"/><circle cx="398.5" cy="245.0" r="0.75"/><circle cx="401.25" cy="249.38" r="0.75"/><circle cx="358.12" cy="253.12" r="0.75"/><circle cx="421.25" cy="216.5" r="0.75"/><circle cx="435.62" cy="216.5" r="0.75"/><circle cx="421.25" cy="235.25" r="0.75"/><circle cx="435.62" cy="235.25" r="0.75"/><circle cx="421.25" cy="254.0" r="0.75"/><circle cx="435.62" cy="254.0" r="0.75"/><circle cx="406.0" cy="214.38" r="0.75"/><circle cx="406.0" cy="221.25" r="0.75"/><circle cx="400.62" cy="223.75" r="0.75"/><circle cx="398.75" cy="231.25" r="0.75"/><circle cx="406.0" cy="236.25" r="0.75"/><circle cx="398.75" cy="245.62" r="0.75"/><circle cx="400.62" cy="249.38" r="0.75"/><circle cx="408.12" cy="249.38" r="0.75"/><circle cx="445.0" cy="227.5" r="0.75"/><circle cx="460.0" cy="227.5" r="0.75"/><circle cx="445.0" cy="243.75" r="0.75"/><circle cx="460.0" cy="243.75" r="0.75"/><circle cx="173.5" cy="258.12" r="0.75"/><circle cx="181.0" cy="258.12" r="0.75"/><circle cx="188.12" cy="253.75" r="0.75"/><circle cx="188.12" cy="268.12" r="0.75"/><circle cx="199.0" cy="254.38" r="0.75"/><circle cx="206.5" cy="254.38" r="0.75"/><circle cx="213.75" cy="254.38" r="0.75"/><circle cx="221.25" cy="254.38" r="0.75"/><circle cx="199.0" cy="276.88" r="0.75"/><circle cx="206.5" cy="276.88" r="0.75"/><circle cx="213.75" cy="276.88" r="0.75"/><circle cx="221.25" cy="276.88" r="0.75"/><circle cx="181.0" cy="276.88" r="1.1" fill="#1a3a20"/><circle cx="181.0" cy="276.88" r="0.7" fill="#ecc0d4"/><circle cx="188.12" cy="276.88" r="1.1" fill="#1a3a20"/><circle cx="188.12" cy="276.88" r="0.7" fill="#ecc0d4"/><circle cx="232.5" cy="260.62" r="0.75"/><circle cx="240.0" cy="260.62" r="0.75"/><circle cx="232.5" cy="275.62" r="0.75"/><circle cx="240.0" cy="275.62" r="0.75"/><circle cx="236.25" cy="256.25" r="0.75"/><circle cx="226.88" cy="282.75" r="0.75"/><circle cx="241.88" cy="282.75" r="0.75"/><circle cx="269.38" cy="257.5" r="0.75"/><circle cx="252.5" cy="269.38" r="1.1" fill="#1a3a20"/><circle cx="252.5" cy="269.38" r="0.7" fill="#ecc0d4"/><circle cx="260.0" cy="269.38" r="1.1" fill="#1a3a20"/><circle cx="260.0" cy="269.38" r="0.7" fill="#ecc0d4"/><circle cx="267.75" cy="269.38" r="1.1" fill="#1a3a20"/><circle cx="267.75" cy="269.38" r="0.7" fill="#ecc0d4"/><circle cx="252.5" cy="276.88" r="1.1" fill="#1a3a20"/><circle cx="252.5" cy="276.88" r="0.7" fill="#ecc0d4"/><circle cx="260.0" cy="276.88" r="1.1" fill="#1a3a20"/><circle cx="260.0" cy="276.88" r="0.7" fill="#ecc0d4"/><circle cx="267.75" cy="276.88" r="1.1" fill="#1a3a20"/><circle cx="267.75" cy="276.88" r="0.7" fill="#ecc0d4"/><circle cx="278.5" cy="255.0" r="0.75"/><circle cx="278.5" cy="269.38" r="0.75"/><circle cx="278.5" cy="284.0" r="0.75"/><circle cx="285.62" cy="253.12" r="0.75"/><circle cx="284.38" cy="276.88" r="0.75"/><circle cx="299.38" cy="276.88" r="0.75"/><circle cx="293.12" cy="284.0" r="0.75"/><circle cx="304.12" cy="284.0" r="0.75"/><circle cx="311.5" cy="284.0" r="0.75"/><circle cx="319.0" cy="284.0" r="0.75"/><circle cx="300.62" cy="266.0" r="0.75"/><circle cx="313.75" cy="251.88" r="0.75"/><circle cx="313.75" cy="266.0" r="0.75"/><circle cx="322.5" cy="253.12" r="0.75"/><circle cx="322.5" cy="260.62" r="0.75"/><circle cx="322.5" cy="268.12" r="0.75"/><circle cx="322.5" cy="260.62" r="0.75"/><circle cx="322.5" cy="268.12" r="0.75"/><circle cx="345.0" cy="260.62" r="0.75"/><circle cx="345.0" cy="268.12" r="0.75"/><circle cx="358.12" cy="253.12" r="0.75"/><circle cx="358.12" cy="268.12" r="0.75"/><circle cx="349.38" cy="273.12" r="0.75"/><circle cx="363.75" cy="273.12" r="0.75"/><circle cx="354.75" cy="279.38" r="0.75"/><circle cx="369.38" cy="279.38" r="0.75"/><circle cx="351.25" cy="286.5" r="0.75"/><circle cx="365.62" cy="286.5" r="0.75"/><circle cx="328.12" cy="282.25" r="0.75"/><circle cx="335.62" cy="282.25" r="0.75"/><circle cx="343.12" cy="282.25" r="0.75"/><circle cx="368.75" cy="261.5" r="1.1" fill="#1a3a20"/><circle cx="368.75" cy="261.5" r="0.7" fill="#ecc0d4"/><circle cx="388.75" cy="261.5" r="1.1" fill="#1a3a20"/><circle cx="388.75" cy="261.5" r="0.7" fill="#ecc0d4"/><circle cx="373.12" cy="273.12" r="0.75"/><circle cx="387.5" cy="273.12" r="0.75"/><circle cx="373.12" cy="280.62" r="0.75"/><circle cx="387.5" cy="280.62" r="0.75"/><circle cx="395.0" cy="271.88" r="0.75"/><circle cx="395.0" cy="280.62" r="0.75"/><circle cx="401.25" cy="263.75" r="0.75"/><circle cx="401.25" cy="286.88" r="0.75"/><circle cx="401.25" cy="250.62" r="0.75"/><circle cx="421.25" cy="271.88" r="0.75"/><circle cx="435.62" cy="271.88" r="0.75"/><circle cx="445.0" cy="260.62" r="0.75"/><circle cx="460.0" cy="260.62" r="0.75"/><circle cx="456.25" cy="276.88" r="0.75"/><circle cx="400.62" cy="264.75" r="0.75"/><circle cx="408.12" cy="264.75" r="0.75"/><circle cx="400.62" cy="250.62" r="0.75"/><circle cx="408.12" cy="250.62" r="0.75"/><circle cx="395.62" cy="271.88" r="0.75"/><circle cx="409.75" cy="271.88" r="0.75"/><circle cx="395.62" cy="280.62" r="0.75"/><circle cx="409.75" cy="280.62" r="0.75"/><circle cx="400.62" cy="286.88" r="0.75"/><circle cx="415.62" cy="286.88" r="0.75"/></g><g fill="none" stroke="#a8a8a8" opacity="0.7"><circle cx="164.4" cy="125.6" r="2.7" stroke-width="0.6"/><path d="M161.70000000000002 125.6h5.4M164.4 122.89999999999999v5.4" stroke-width="0.6"/><circle cx="461.6" cy="125.6" r="2.7" stroke-width="0.6"/><path d="M458.90000000000003 125.6h5.4M461.6 122.89999999999999v5.4" stroke-width="0.6"/><circle cx="164.4" cy="288.5" r="2.7" stroke-width="0.6"/><path d="M161.70000000000002 288.5h5.4M164.4 285.8v5.4" stroke-width="0.6"/><circle cx="461.6" cy="288.5" r="2.7" stroke-width="0.6"/><path d="M458.90000000000003 288.5h5.4M461.6 285.8v5.4" stroke-width="0.6"/><rect x="188.75" y="124.38" width="6.25" height="13.74" rx="0" stroke-width="0.6"/><rect x="207.75" y="132.88" width="8.5" height="4.37" rx="0" stroke-width="0.6"/><rect x="224.0" y="129.75" width="24.12" height="10.87" rx="0" stroke-width="0.6"/><rect x="194.75" y="147.75" width="9.63" height="4.5" rx="0" stroke-width="0.6"/><path d="M218.75 145.62 H238.75 V152.5 Q228.75 162.5 218.75 152.5 Z" stroke-width="0.6"/><circle cx="247.25" cy="151.5" r="6.88" stroke-width="0.6"/><rect x="255.0" y="133.75" width="7.5" height="9.37" rx="0" stroke-width="0.6"/><rect x="263.5" y="135.62" width="5.0" height="10.0" rx="0" stroke-width="0.6"/><rect x="271.0" y="133.75" width="5.0" height="10.0" rx="0" stroke-width="0.6"/><path d="M 281.88 141.5 C 272.5 143.12 272.5 159.38 281.88 161.0" stroke-width="0.6"/><rect x="288.75" y="133.75" width="6.25" height="9.75" rx="0" stroke-width="0.6"/><rect x="304.0" y="128.5" width="8.75" height="4.0" rx="0" stroke-width="0.6"/><rect x="303.12" y="133.75" width="10.63" height="9.37" rx="0" stroke-width="0.6"/><rect x="304.0" y="144.38" width="8.75" height="4.12" rx="0" stroke-width="0.6"/><rect x="301.88" y="150.62" width="9.37" height="6.26" rx="0" stroke-width="0.6"/><rect x="288.75" y="158.12" width="6.25" height="6.88" rx="0" stroke-width="0.6"/><rect x="360.62" y="130.62" width="10.63" height="5.63" rx="0" stroke-width="0.6"/><rect x="360.62" y="140.0" width="10.63" height="5.62" rx="0" stroke-width="0.6"/><rect x="380.25" y="120.25" width="29.75" height="18.5" rx="0" stroke-width="0.6"/><path d="M395.0 120.25 L395.0 127.5" stroke-width="0.6"/><rect x="351.88" y="150.62" width="5.62" height="9.38" rx="0" stroke-width="0.6"/><circle cx="372.5" cy="151.88" r="5.25" stroke-width="0.6"/><rect x="383.75" y="149.38" width="5.25" height="8.74" rx="0" stroke-width="0.6"/><rect x="392.25" y="146.25" width="5.87" height="6.87" rx="0" stroke-width="0.6"/><rect x="401.88" y="149.38" width="5.62" height="8.74" rx="0" stroke-width="0.6"/><circle cx="421.25" cy="135.0" r="7.5" stroke-width="0.6"/><rect x="435.0" y="125.62" width="9.0" height="4.13" rx="0" stroke-width="0.6"/><rect x="438.12" y="133.12" width="9.38" height="4.13" rx="0" stroke-width="0.6"/><path d="M 437.5 151.25 L 455.62 151.25 C 457.5 135.0 435.62 135.0 437.5 151.25 Z" stroke-width="0.6"/><rect x="421.5" y="145.0" width="14.12" height="5.62" rx="0" stroke-width="0.6"/><rect x="435.0" y="153.12" width="9.0" height="4.38" rx="0" stroke-width="0.6"/><circle cx="193.75" cy="166.25" r="7.5" stroke-width="0.6"/><circle cx="211.88" cy="166.25" r="10.62" stroke-width="0.6"/><rect x="201.25" y="163.75" width="3.75" height="5.0" rx="0" stroke-width="0.6"/><circle cx="175.0" cy="186.88" r="5.25" stroke-width="0.6"/><rect x="218.12" y="185.62" width="10.0" height="5.63" rx="0" stroke-width="0.6"/><rect x="215.0" y="198.12" width="6.25" height="10.0" rx="0" stroke-width="0.6"/><rect x="225.62" y="198.12" width="6.26" height="10.0" rx="0" stroke-width="0.6"/><rect x="231.25" y="168.12" width="24.37" height="10.63" rx="0" stroke-width="0.6"/><path d="M231.25 173.12 L255.62 173.12" stroke-width="0.5"/><rect x="261.5" y="175.0" width="4.75" height="8.75" rx="0" stroke-width="0.6"/><rect x="246.88" y="181.0" width="8.74" height="4.0" rx="0" stroke-width="0.6"/><circle cx="276.62" cy="184.38" r="8.12" stroke-width="0.6"/><path d="M 271.25 194.75 C 263.12 196.25 263.12 206.25 271.25 207.75" stroke-width="0.6"/><rect x="277.5" y="200.0" width="6.88" height="10.0" rx="0" stroke-width="0.6"/><circle cx="291.5" cy="177.25" r="5.0" stroke-width="0.6"/><rect x="288.75" y="161.25" width="6.25" height="5.63" rx="0" stroke-width="0.6"/><rect x="318.75" y="178.75" width="6.25" height="4.37" rx="0" stroke-width="0.6"/><rect x="332.5" y="171.25" width="10.25" height="5.0" rx="0" stroke-width="0.6"/><rect x="318.12" y="178.75" width="10.0" height="5.63" rx="0" stroke-width="0.6"/><rect x="346.25" y="178.75" width="9.37" height="5.0" rx="0" stroke-width="0.6"/><rect x="339.38" y="185.62" width="8.74" height="5.63" rx="0" stroke-width="0.6"/><rect x="339.38" y="193.5" width="8.74" height="5.25" rx="0" stroke-width="0.6"/><path d="M 361.25 170.0 L 376.88 170.0 C 377.5 177.5 373.75 181.88 369.38 182.25 C 365.0 181.88 360.62 177.5 361.25 170.0 Z" stroke-width="0.6"/><rect x="379.38" y="169.38" width="6.24" height="8.74" rx="0" stroke-width="0.6"/><rect x="383.12" y="184.38" width="9.38" height="5.37" rx="0" stroke-width="0.6"/><rect x="397.5" y="181.88" width="12.5" height="10.0" rx="0" stroke-width="0.6"/><rect x="333.75" y="203.75" width="5.0" height="6.25" rx="0" stroke-width="0.6"/><rect x="341.88" y="205.0" width="5.62" height="5.0" rx="0" stroke-width="0.6"/><rect x="420.0" y="160.62" width="9.38" height="4.38" rx="0" stroke-width="0.6"/><rect x="420.0" y="167.75" width="9.38" height="4.75" rx="0" stroke-width="0.6"/><rect x="398.12" y="173.12" width="9.38" height="5.63" rx="0" stroke-width="0.6"/><rect x="426.88" y="175.0" width="10.0" height="5.0" rx="0" stroke-width="0.6"/><rect x="443.75" y="165.62" width="6.25" height="8.76" rx="0" stroke-width="0.6"/><rect x="451.25" y="164.38" width="5.63" height="8.74" rx="0" stroke-width="0.6"/><rect x="396.88" y="182.25" width="55.62" height="9.25" rx="0" stroke-width="0.6"/><circle cx="452.25" cy="186.62" r="1.88" stroke-width="0.9"/><rect x="398.12" y="195.62" width="9.38" height="5.0" rx="0" stroke-width="0.6"/><rect x="420.0" y="196.88" width="9.38" height="5.62" rx="0" stroke-width="0.6"/><rect x="403.12" y="203.12" width="10.0" height="4.38" rx="0" stroke-width="0.6"/><rect x="173.75" y="207.5" width="6.87" height="8.12" rx="0" stroke-width="0.6"/><path d="M 170.0 230.0 C 170.62 226.25 179.38 226.25 180.0 230.0" stroke-width="0.6"/><path d="M 185.62 227.5 L 185.62 245.0 C 200.0 246.25 200.0 226.25 185.62 227.5 Z" stroke-width="0.6"/><circle cx="208.75" cy="240.25" r="10.0" stroke-width="0.6"/><circle cx="228.75" cy="230.62" r="9.38" stroke-width="0.6"/><rect x="232.5" y="245.0" width="7.5" height="10.0" rx="0" stroke-width="0.6"/><rect x="178.75" y="246.25" width="5.0" height="7.5" rx="0" stroke-width="0.6"/><rect x="247.5" y="225.62" width="10.0" height="5.0" rx="0" stroke-width="0.6"/><rect x="247.5" y="232.75" width="10.0" height="4.75" rx="0" stroke-width="0.6"/><rect x="247.5" y="241.5" width="10.0" height="4.75" rx="0" stroke-width="0.6"/><rect x="247.5" y="250.62" width="10.0" height="4.38" rx="0" stroke-width="0.6"/><rect x="266.88" y="222.5" width="15.0" height="9.38" rx="3" stroke-width="0.6"/><path d="M 281.88 236.88 L 281.88 255.0 C 296.25 255.0 296.25 236.88 281.88 236.88 Z" stroke-width="0.6"/><rect x="266.88" y="245.0" width="5.62" height="10.0" rx="0" stroke-width="0.6"/><rect x="311.88" y="226.88" width="6.24" height="8.12" rx="0" stroke-width="0.6"/><rect x="233.75" y="243.75" width="6.25" height="11.25" rx="0" stroke-width="0.6"/><rect x="393.75" y="210.62" width="8.75" height="6.88" rx="0" stroke-width="0.6"/><rect x="342.5" y="221.25" width="9.38" height="5.0" rx="0" stroke-width="0.6"/><rect x="388.75" y="220.62" width="9.37" height="6.26" rx="0" stroke-width="0.6"/><rect x="356.88" y="228.12" width="6.87" height="8.13" rx="0" stroke-width="0.6"/><circle cx="328.75" cy="230.62" r="7.5" stroke-width="0.6"/><rect x="340.62" y="233.75" width="10.0" height="5.0" rx="0" stroke-width="0.6"/><rect x="325.62" y="241.88" width="16.88" height="30.62" rx="0" stroke-width="0.6"/><rect x="395.62" y="234.38" width="6.26" height="8.12" rx="0" stroke-width="0.6"/><rect x="412.75" y="208.62" width="32.75" height="14.625" rx="7" stroke="#3c9c3c" stroke-width="0.6"/><path d="M425.62 216.5 L431.25 216.5" stroke-width="0.8"/><rect x="412.75" y="227.38" width="32.75" height="14.625" rx="7" stroke="#3c9c3c" stroke-width="0.6"/><path d="M425.62 235.25 L431.25 235.25" stroke-width="0.8"/><rect x="412.75" y="246.12" width="32.75" height="14.625" rx="7" stroke="#3c9c3c" stroke-width="0.6"/><path d="M425.62 254.0 L431.25 254.0" stroke-width="0.8"/><rect x="447.5" y="223.75" width="10.0" height="7.5" rx="0" stroke-width="0.6"/><rect x="447.5" y="240.62" width="10.0" height="6.26" rx="0" stroke-width="0.6"/><rect x="395.0" y="211.88" width="7.5" height="5.62" rx="0" stroke-width="0.6"/><rect x="403.12" y="226.88" width="5.63" height="6.24" rx="0" stroke-width="0.6"/><rect x="395.0" y="236.25" width="6.25" height="7.5" rx="0" stroke-width="0.6"/><circle cx="173.5" cy="258.12" r="5.25" stroke-width="0.6"/><rect x="184.75" y="258.75" width="7.13" height="6.87" rx="0" stroke-width="0.6"/><rect x="195.25" y="257.25" width="30.75" height="17.13" rx="0" stroke-width="0.6"/><rect x="177.5" y="273.12" width="14.38" height="7.5" rx="2.5" stroke-width="0.6"/><rect x="178.25" y="274.0" width="5.5" height="6.0" rx="0" stroke-width="0.6"/><rect x="185.38" y="274.0" width="5.5" height="6.0" rx="0" stroke-width="0.6"/><rect x="227.5" y="261.88" width="15.0" height="11.24" rx="0" stroke-width="0.6"/><rect x="230.0" y="280.0" width="8.75" height="6.25" rx="0" stroke-width="0.6"/><rect x="245.0" y="262.5" width="30.25" height="29.38" rx="0" stroke-width="0.7"/><path d="M260.0 278.75 L260.0 291.88" stroke-width="0.6"/><rect x="276.0" y="258.12" width="5.5" height="8.13" rx="0" stroke-width="0.6"/><rect x="286.88" y="273.75" width="10.0" height="6.25" rx="0" stroke-width="0.6"/><rect x="281.88" y="281.88" width="8.12" height="5.0" rx="0" stroke-width="0.6"/><path d="M 301.88 279.75 L 321.25 279.75 C 322.5 287.5 316.25 291.88 311.5 291.88 C 306.88 291.88 300.62 287.5 301.88 279.75 Z" stroke-width="0.6"/><circle cx="300.62" cy="266.0" r="5.0" stroke-width="0.6"/><rect x="310.62" y="255.0" width="6.26" height="8.12" rx="0" stroke-width="0.6"/><rect x="355.62" y="256.25" width="5.38" height="8.75" rx="0" stroke-width="0.6"/><rect x="351.88" y="271.0" width="9.37" height="4.62" rx="0" stroke-width="0.6"/><rect x="357.5" y="277.25" width="9.38" height="4.63" rx="0" stroke-width="0.6"/><rect x="353.75" y="284.38" width="9.37" height="4.37" rx="0" stroke-width="0.6"/><path d="M 326.25 286.25 L 345.0 286.25 C 346.25 278.75 340.0 274.38 335.62 274.38 C 331.25 274.38 325.0 278.75 326.25 286.25 Z" stroke-width="0.6"/><rect x="375.62" y="270.62" width="9.38" height="5.0" rx="0" stroke-width="0.6"/><rect x="375.62" y="278.12" width="9.38" height="5.0" rx="0" stroke-width="0.6"/><rect x="396.88" y="253.75" width="8.12" height="7.5" rx="0" stroke-width="0.6"/><rect x="397.5" y="268.75" width="7.5" height="6.25" rx="0" stroke-width="0.6"/><rect x="398.12" y="278.12" width="6.88" height="6.26" rx="0" stroke-width="0.6"/><rect x="412.75" y="264.25" width="32.75" height="14.625" rx="7" stroke="#3c9c3c" stroke-width="0.6"/><path d="M425.62 271.88 L431.25 271.88" stroke-width="0.8"/><rect x="447.5" y="256.88" width="10.0" height="7.5" rx="0" stroke-width="0.6"/><rect x="397.5" y="253.75" width="6.25" height="7.5" rx="0" stroke-width="0.6"/><rect x="405.62" y="253.75" width="5.0" height="7.5" rx="0" stroke-width="0.6"/><rect x="398.12" y="268.75" width="9.38" height="6.25" rx="0" stroke-width="0.6"/><rect x="398.75" y="278.12" width="8.13" height="5.63" rx="0" stroke-width="0.6"/><rect x="403.75" y="284.38" width="8.75" height="5.0" rx="0" stroke-width="0.6"/></g><g fill="none" stroke="#d6d6d6" opacity="0.9"><circle cx="164.4" cy="125.6" r="5.1" stroke-width="0.8"/><circle cx="461.6" cy="125.6" r="5.1" stroke-width="0.8"/><circle cx="164.4" cy="288.5" r="5.1" stroke-width="0.8"/><circle cx="461.6" cy="288.5" r="5.1" stroke-width="0.8"/><path d="M211.30 133.47v3.2M212.70 133.47v3.2M208.25 135.06h3.05M212.70 135.06h3.05" stroke-width="0.6"/><path d="M198.87 148.40v3.2M200.26 148.40v3.2M195.25 150.00h3.61M200.26 150.00h3.61" stroke-width="0.6"/><path d="M246.45 149.50v4M248.05 149.50v4" stroke-width="0.7"/><path d="M257.15 137.74h3.2M257.15 139.13h3.2M258.75 134.25v3.49M258.75 139.13v3.49" stroke-width="0.6"/><path d="M264.40 139.92h3.2M264.40 141.32h3.2M266.00 136.12v3.80M266.00 141.32v3.80" stroke-width="0.6"/><path d="M271.90 138.05h3.2M271.90 139.45h3.2M273.50 134.25v3.80M273.50 139.45v3.80" stroke-width="0.6"/><path d="M290.27 137.93h3.2M290.27 139.32h3.2M291.88 134.25v3.67M291.88 139.32v3.67" stroke-width="0.6"/><path d="M307.68 128.90v3.2M309.07 128.90v3.2M304.50 130.50h3.17M309.07 130.50h3.17" stroke-width="0.6"/><path d="M307.74 136.84v3.2M309.13 136.84v3.2M303.62 138.44h4.11M309.13 138.44h4.11" stroke-width="0.6"/><path d="M307.68 144.84v3.2M309.07 144.84v3.2M304.50 146.44h3.17M309.07 146.44h3.17" stroke-width="0.6"/><path d="M305.87 152.15v3.2M307.26 152.15v3.2M302.38 153.75h3.49M307.26 153.75h3.49" stroke-width="0.6"/><rect x="319.38" y="135.0" width="30.62" height="29.38" rx="0" stroke-width="0.8"/><path d="M290.27 160.86h3.2M290.27 162.26h3.2M291.88 158.62v2.24M291.88 162.26v2.24" stroke-width="0.6"/><path d="M365.24 131.84v3.2M366.63 131.84v3.2M361.12 133.44h4.11M366.63 133.44h4.11" stroke-width="0.6"/><path d="M365.24 141.21v3.2M366.63 141.21v3.2M361.12 142.81h4.11M366.63 142.81h4.11" stroke-width="0.6"/><path d="M353.09 154.61h3.2M353.09 156.01h3.2M354.69 151.12v3.49M354.69 156.01v3.49" stroke-width="0.6"/><path d="M384.77 153.05h3.2M384.77 154.45h3.2M386.38 149.88v3.17M386.38 154.45v3.17" stroke-width="0.6"/><path d="M393.58 148.99h3.2M393.58 150.38h3.2M395.19 146.75v2.24M395.19 150.38v2.24" stroke-width="0.6"/><path d="M403.09 153.05h3.2M403.09 154.45h3.2M404.69 149.88v3.17M404.69 154.45v3.17" stroke-width="0.6"/><path d="M420.45 133.00v4M422.05 133.00v4" stroke-width="0.7"/><path d="M438.80 126.09v3.2M440.20 126.09v3.2M435.50 127.69h3.30M440.20 127.69h3.30" stroke-width="0.6"/><path d="M442.11 133.59v3.2M443.51 133.59v3.2M438.62 135.19h3.49M443.51 135.19h3.49" stroke-width="0.6"/><path d="M438.80 153.71v3.2M440.20 153.71v3.2M435.50 155.31h3.30M440.20 155.31h3.30" stroke-width="0.6"/><path d="M192.95 164.25v4M194.55 164.25v4" stroke-width="0.7"/><path d="M211.08 164.25v4M212.68 164.25v4" stroke-width="0.7"/><path d="M201.53 165.55h3.2M201.53 166.95h3.2M203.12 164.25v1.30M203.12 166.95v1.30" stroke-width="0.6"/><rect x="182.5" y="190.62" width="29.38" height="28.76" rx="0" stroke-width="0.8"/><path d="M222.42 186.84v3.2M223.82 186.84v3.2M218.62 188.44h3.80M223.82 188.44h3.80" stroke-width="0.6"/><path d="M216.53 202.42h3.2M216.53 203.82h3.2M218.12 198.62v3.80M218.12 203.82v3.80" stroke-width="0.6"/><path d="M227.15 202.42h3.2M227.15 203.82h3.2M228.75 198.62v3.80M228.75 203.82v3.80" stroke-width="0.6"/><path d="M262.27 178.68h3.2M262.27 180.07h3.2M263.88 175.50v3.17M263.88 180.07v3.17" stroke-width="0.6"/><path d="M250.55 181.40v3.2M251.95 181.40v3.2M247.38 183.00h3.17M251.95 183.00h3.17" stroke-width="0.6"/><path d="M275.82 182.38v4M277.42 182.38v4" stroke-width="0.7"/><path d="M279.34 204.30h3.2M279.34 205.70h3.2M280.94 200.50v3.80M280.94 205.70v3.80" stroke-width="0.6"/><rect x="234.0" y="190.62" width="29.12" height="28.76" rx="0" stroke-width="0.8"/><rect x="286.0" y="190.62" width="29.0" height="28.76" rx="0" stroke-width="0.8"/><rect x="297.5" y="158.12" width="14.0" height="26.63" rx="0" stroke-width="0.8"/><path d="M291.18 162.47v3.2M292.57 162.47v3.2M289.25 164.06h1.93M292.57 164.06h1.93" stroke-width="0.6"/><path d="M321.18 179.34v3.2M322.57 179.34v3.2M319.25 180.94h1.93M322.57 180.94h1.93" stroke-width="0.6"/><path d="M336.93 172.15v3.2M338.32 172.15v3.2M333.00 173.75h3.92M338.32 173.75h3.92" stroke-width="0.6"/><path d="M322.42 179.97v3.2M323.82 179.97v3.2M318.62 181.56h3.80M323.82 181.56h3.80" stroke-width="0.6"/><path d="M350.24 179.65v3.2M351.63 179.65v3.2M346.75 181.25h3.49M351.63 181.25h3.49" stroke-width="0.6"/><path d="M343.05 186.84v3.2M344.45 186.84v3.2M339.88 188.44h3.17M344.45 188.44h3.17" stroke-width="0.6"/><path d="M343.05 194.53v3.2M344.45 194.53v3.2M339.88 196.12h3.17M344.45 196.12h3.17" stroke-width="0.6"/><path d="M380.90 173.05h3.2M380.90 174.45h3.2M382.50 169.88v3.17M382.50 174.45v3.17" stroke-width="0.6"/><path d="M387.11 185.47v3.2M388.51 185.47v3.2M383.62 187.06h3.49M388.51 187.06h3.49" stroke-width="0.6"/><path d="M403.05 185.28v3.2M404.45 185.28v3.2M398.00 186.88h5.05M404.45 186.88h5.05" stroke-width="0.6"/><rect x="354.38" y="190.62" width="29.37" height="28.76" rx="0" stroke-width="0.8"/><rect x="318.12" y="190.0" width="13.13" height="22.5" rx="0" stroke-width="0.8"/><path d="M334.65 206.18h3.2M334.65 207.57h3.2M336.25 204.25v1.93M336.25 207.57v1.93" stroke-width="0.6"/><path d="M343.99 205.90v3.2M345.39 205.90v3.2M342.38 207.50h1.61M345.39 207.50h1.61" stroke-width="0.6"/><path d="M423.99 161.21v3.2M425.39 161.21v3.2M420.50 162.81h3.49M425.39 162.81h3.49" stroke-width="0.6"/><path d="M423.99 168.53v3.2M425.39 168.53v3.2M420.50 170.12h3.49M425.39 170.12h3.49" stroke-width="0.6"/><path d="M402.11 174.34v3.2M403.51 174.34v3.2M398.62 175.94h3.49M403.51 175.94h3.49" stroke-width="0.6"/><path d="M431.18 175.90v3.2M432.58 175.90v3.2M427.38 177.50h3.80M432.58 177.50h3.80" stroke-width="0.6"/><path d="M445.27 169.30h3.2M445.27 170.70h3.2M446.88 166.12v3.18M446.88 170.70v3.18" stroke-width="0.6"/><path d="M452.46 168.05h3.2M452.46 169.45h3.2M454.06 164.88v3.17M454.06 169.45v3.17" stroke-width="0.6"/><path d="M402.11 196.52v3.2M403.51 196.52v3.2M398.62 198.12h3.49M403.51 198.12h3.49" stroke-width="0.6"/><path d="M423.99 198.09v3.2M425.39 198.09v3.2M420.50 199.69h3.49M425.39 199.69h3.49" stroke-width="0.6"/><path d="M407.42 203.71v3.2M408.82 203.71v3.2M403.62 205.31h3.80M408.82 205.31h3.80" stroke-width="0.6"/><path d="M175.59 210.86h3.2M175.59 212.26h3.2M177.19 208.00v2.86M177.19 212.26v2.86" stroke-width="0.6"/><path d="M207.95 238.25v4M209.55 238.25v4" stroke-width="0.7"/><path d="M227.95 228.62v4M229.55 228.62v4" stroke-width="0.7"/><path d="M234.65 249.30h3.2M234.65 250.70h3.2M236.25 245.50v3.80M236.25 250.70v3.80" stroke-width="0.6"/><path d="M179.65 249.30h3.2M179.65 250.70h3.2M181.25 246.75v2.55M181.25 250.70v2.55" stroke-width="0.6"/><path d="M251.80 226.52v3.2M253.20 226.52v3.2M248.00 228.12h3.80M253.20 228.12h3.80" stroke-width="0.6"/><path d="M251.80 233.53v3.2M253.20 233.53v3.2M248.00 235.12h3.80M253.20 235.12h3.80" stroke-width="0.6"/><path d="M251.80 242.28v3.2M253.20 242.28v3.2M248.00 243.88h3.80M253.20 243.88h3.80" stroke-width="0.6"/><path d="M251.80 251.21v3.2M253.20 251.21v3.2M248.00 252.81h3.80M253.20 252.81h3.80" stroke-width="0.6"/><path d="M268.09 249.30h3.2M268.09 250.70h3.2M269.69 245.50v3.80M269.69 250.70v3.80" stroke-width="0.6"/><rect x="295.62" y="229.38" width="14.38" height="26.24" rx="6.5" stroke-width="1.0"/><path d="M313.40 230.24h3.2M313.40 231.64h3.2M315.00 227.38v2.86M315.00 231.64v2.86" stroke-width="0.6"/><path d="M235.28 248.68h3.2M235.28 250.07h3.2M236.88 244.25v4.42M236.88 250.07v4.42" stroke-width="0.6"/><path d="M397.43 212.46v3.2M398.82 212.46v3.2M394.25 214.06h3.17M398.82 214.06h3.17" stroke-width="0.6"/><path d="M346.49 222.15v3.2M347.89 222.15v3.2M343.00 223.75h3.49M347.89 223.75h3.49" stroke-width="0.6"/><path d="M392.74 222.15v3.2M394.13 222.15v3.2M389.25 223.75h3.49M394.13 223.75h3.49" stroke-width="0.6"/><path d="M358.71 231.49h3.2M358.71 232.88h3.2M360.31 228.62v2.86M360.31 232.88v2.86" stroke-width="0.6"/><path d="M327.95 228.62v4M329.55 228.62v4" stroke-width="0.7"/><path d="M344.92 234.65v3.2M346.32 234.65v3.2M341.12 236.25h3.80M346.32 236.25h3.80" stroke-width="0.6"/><rect x="364.38" y="236.88" width="28.74" height="28.74" rx="0" stroke-width="0.8"/><path d="M397.15 237.74h3.2M397.15 239.14h3.2M398.75 234.88v2.86M398.75 239.14v2.86" stroke-width="0.6"/><rect x="413.5" y="209.38" width="31.25" height="13.12" rx="6.3" stroke-width="1.0"/><rect x="413.5" y="228.12" width="31.25" height="13.13" rx="6.3" stroke-width="1.0"/><rect x="413.5" y="246.88" width="31.25" height="13.12" rx="6.3" stroke-width="1.0"/><path d="M451.80 225.90v3.2M453.20 225.90v3.2M448.00 227.50h3.80M453.20 227.50h3.80" stroke-width="0.6"/><path d="M451.80 242.15v3.2M453.20 242.15v3.2M448.00 243.75h3.80M453.20 243.75h3.80" stroke-width="0.6"/><path d="M398.05 213.09v3.2M399.45 213.09v3.2M395.50 214.69h2.55M399.45 214.69h2.55" stroke-width="0.6"/><path d="M404.33 229.30h3.2M404.33 230.70h3.2M405.94 227.38v1.92M405.94 230.70v1.92" stroke-width="0.6"/><path d="M396.52 239.30h3.2M396.52 240.70h3.2M398.12 236.75v2.55M398.12 240.70v2.55" stroke-width="0.6"/><path d="M187.62 260.58v3.2M189.01 260.58v3.2M185.25 262.19h2.36M189.01 262.19h2.36" stroke-width="0.6"/><path d="M233.68 281.52v3.2M235.07 281.52v3.2M230.50 283.12h3.17M235.07 283.12h3.17" stroke-width="0.6"/><path d="M277.15 261.49h3.2M277.15 262.88h3.2M278.75 258.62v2.86M278.75 262.88v2.86" stroke-width="0.6"/><path d="M291.18 275.27v3.2M292.58 275.27v3.2M287.38 276.88h3.80M292.58 276.88h3.80" stroke-width="0.6"/><path d="M285.24 282.78v3.2M286.64 282.78v3.2M282.38 284.38h2.86M286.64 284.38h2.86" stroke-width="0.6"/><path d="M312.15 258.36h3.2M312.15 259.76h3.2M313.75 255.50v2.86M313.75 259.76v2.86" stroke-width="0.6"/><path d="M356.71 259.93h3.2M356.71 261.32h3.2M358.31 256.75v3.17M358.31 261.32v3.17" stroke-width="0.6"/><path d="M355.87 271.71v3.2M357.26 271.71v3.2M352.38 273.31h3.49M357.26 273.31h3.49" stroke-width="0.6"/><path d="M361.49 277.96v3.2M362.89 277.96v3.2M358.00 279.56h3.49M362.89 279.56h3.49" stroke-width="0.6"/><path d="M357.74 284.96v3.2M359.13 284.96v3.2M354.25 286.56h3.49M359.13 286.56h3.49" stroke-width="0.6"/><path d="M379.61 271.52v3.2M381.01 271.52v3.2M376.12 273.12h3.49M381.01 273.12h3.49" stroke-width="0.6"/><path d="M379.61 279.02v3.2M381.01 279.02v3.2M376.12 280.62h3.49M381.01 280.62h3.49" stroke-width="0.6"/><path d="M400.24 255.90v3.2M401.64 255.90v3.2M397.38 257.50h2.86M401.64 257.50h2.86" stroke-width="0.6"/><path d="M400.55 270.27v3.2M401.95 270.27v3.2M398.00 271.88h2.55M401.95 271.88h2.55" stroke-width="0.6"/><path d="M400.86 279.65v3.2M402.26 279.65v3.2M398.62 281.25h2.24M402.26 281.25h2.24" stroke-width="0.6"/><rect x="413.5" y="265.0" width="31.25" height="13.12" rx="6.3" stroke-width="1.0"/><path d="M451.80 259.03v3.2M453.20 259.03v3.2M448.00 260.63h3.80M453.20 260.63h3.80" stroke-width="0.6"/><path d="M399.02 256.80h3.2M399.02 258.20h3.2M400.62 254.25v2.55M400.62 258.20v2.55" stroke-width="0.6"/><path d="M406.52 256.80h3.2M406.52 258.20h3.2M408.12 254.25v2.55M408.12 258.20v2.55" stroke-width="0.6"/><path d="M402.11 270.27v3.2M403.51 270.27v3.2M398.62 271.88h3.49M403.51 271.88h3.49" stroke-width="0.6"/><path d="M402.12 279.33v3.2M403.51 279.33v3.2M399.25 280.94h2.86M403.51 280.94h2.86" stroke-width="0.6"/><path d="M407.43 285.28v3.2M408.82 285.28v3.2M404.25 286.88h3.17M408.82 286.88h3.17" stroke-width="0.6"/></g><g><text x="302.8" y="323.2" font-size="6.3" fill="#c4c4c4" textLength="19.8" lengthAdjust="spacingAndGlyphs">107.30</text><text x="0.0" y="0.0" font-size="5.8" fill="#c4c4c4" transform="translate(143 215.6) rotate(-90)" textLength="17.6" lengthAdjust="spacingAndGlyphs">60.63</text><text x="211.88" y="125.75" font-size="6.2" fill="#dcd4d8" id="pt1" stroke="#dcd4d8" stroke-width="0.25" font-family="Liberation Mono, monospace" textLength="61" lengthAdjust="spacingAndGlyphs">7MHz CW receiver</text><text x="291.25" y="125.75" font-size="6.2" fill="#dcd4d8" id="pt2" stroke="#dcd4d8" stroke-width="0.25" font-family="Liberation Mono, monospace" textLength="61" lengthAdjust="spacingAndGlyphs">RADIO KITS IN JA</text><text x="352.75" y="123.75" font-size="4.5" fill="#d0d0d0" >+</text><text x="323.12" y="156.25" font-size="3.6" fill="#8c8c8c" >10.7-6mo</text><text x="169.75" y="181.0" font-size="5.2" fill="#c8c8c8" >ANT</text><text x="178.75" y="178.75" font-size="4.5" fill="#c8c8c8" >+</text><text x="166.0" y="156.5" font-size="7" fill="#c8c8c8" font-style="italic">+V</text><text x="168.0" y="238.0" font-size="6.4" fill="#c8c8c8" >P</text><text x="165.0" y="236.25" font-size="4" fill="#b0b0b0" >+</text><text x="185.75" y="289.0" font-size="6.4" fill="#c8c8c8" >E</text><text x="0.0" y="0.0" font-size="6" fill="#b8b8b8" transform="translate(170.5 271) rotate(-75)">R2</text></g></svg>
</body></html>
